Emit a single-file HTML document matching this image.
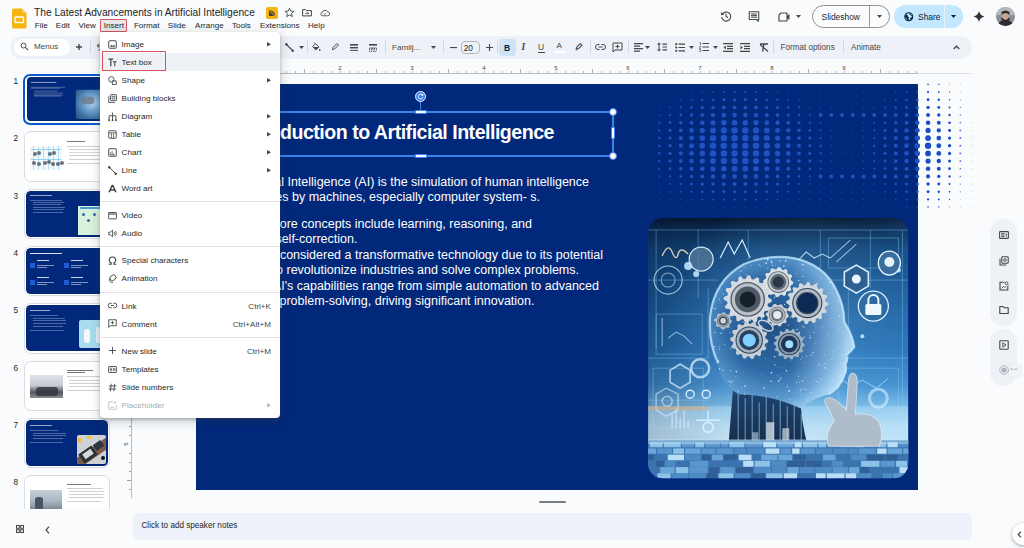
<!DOCTYPE html><html><head><meta charset="utf-8"><style>
*{margin:0;padding:0;box-sizing:border-box}
html,body{width:1024px;height:548px;overflow:hidden;background:#f9fbfd;font-family:"Liberation Sans",sans-serif;color:#1f1f1f}
.abs{position:absolute}
.t{position:absolute;white-space:nowrap;line-height:1}
svg{position:absolute;overflow:visible}
</style></head><body>
<svg class="abs" style="left:12px;top:8px" width="15" height="21" viewBox="0 0 15 21">
<path d="M1.5 0.5 H10 L14.5 5 V19 Q14.5 20.5 13 20.5 H1.5 Q0 20.5 0 19 V2 Q0 0.5 1.5 0.5Z" fill="#f6b40e"/>
<path d="M10 0.5 L14.5 5 H11.5 Q10 5 10 3.5Z" fill="#f9cf6b"/>
<rect x="3" y="9" width="8.5" height="5.5" rx="0.8" fill="none" stroke="#fff" stroke-width="1.4"/>
</svg>
<div class="t" style="left:34px;top:8px;font-size:10.2px;color:#1f1f1f">The Latest Advancements in Artificial Intelligence</div>
<svg style="left:266px;top:7px" width="12" height="12" viewBox="0 0 12 12"><rect x="0" y="0" width="12" height="12" rx="2" fill="#f6b40e"/>
<path d="M3 3.5 H6 L9 6.5 V9 H3Z" fill="#3c3c3c"/><path d="M2.5 2.5 L9.5 9.5" stroke="#f6b40e" stroke-width="1.2"/><path d="M2.5 2.5 L9.5 9.5" stroke="#3c3c3c" stroke-width="0.6"/></svg>
<svg style="left:284px;top:7px" width="11" height="11" viewBox="0 0 24 24"><path d="M12 2.5l2.8 6.4 6.9.6-5.2 4.6 1.6 6.8L12 17.3l-6.1 3.6 1.6-6.8L2.3 9.5l6.9-.6z" fill="none" stroke="#444746" stroke-width="2"/></svg>
<svg style="left:302px;top:9.3px" width="10" height="7.5" viewBox="0 0 20 15"><path d="M1.2 1.2h6l1.6 2h10v10.6H1.2z" fill="none" stroke="#444746" stroke-width="2" stroke-linejoin="round"/><path d="M6 8.5h7M10.5 6l2.5 2.5-2.5 2.5" fill="none" stroke="#444746" stroke-width="1.6"/></svg>
<svg style="left:320px;top:8.8px" width="10" height="7.5" viewBox="0 0 20 15"><path d="M5 13.5h10.5a3.8 3.8 0 0 0 0-7.6 5.8 5.8 0 0 0-11 1.4A3.1 3.1 0 0 0 5 13.5z" fill="none" stroke="#444746" stroke-width="1.7"/><path d="M7.5 9.3l2 2 3.5-3.5" fill="none" stroke="#444746" stroke-width="1.4"/></svg>
<div class="abs" style="left:100px;top:19px;width:27px;height:13px;background:#e6e8eb;border:1px solid #d9525e;border-radius:1px"></div>
<div class="t" style="left:34.7px;top:21.8px;font-size:8.1px;color:#1f1f1f">File</div>
<div class="t" style="left:55.8px;top:21.8px;font-size:8.1px;color:#1f1f1f">Edit</div>
<div class="t" style="left:78.4px;top:21.8px;font-size:8.1px;color:#1f1f1f">View</div>
<div class="t" style="left:103.75px;top:21.8px;font-size:8.1px;color:#1f1f1f">Insert</div>
<div class="t" style="left:133.9px;top:21.8px;font-size:8.1px;color:#1f1f1f">Format</div>
<div class="t" style="left:167.8px;top:21.8px;font-size:8.1px;color:#1f1f1f">Slide</div>
<div class="t" style="left:195px;top:21.8px;font-size:8.1px;color:#1f1f1f">Arrange</div>
<div class="t" style="left:232px;top:21.8px;font-size:8.1px;color:#1f1f1f">Tools</div>
<div class="t" style="left:260px;top:21.8px;font-size:8.1px;color:#1f1f1f">Extensions</div>
<div class="t" style="left:308px;top:21.8px;font-size:8.1px;color:#1f1f1f">Help</div>
<svg style="left:719.5px;top:10.3px" width="12" height="12" viewBox="0 0 24 24"><path d="M4.2 9.5A9 9 0 1 1 3.5 14" fill="none" stroke="#444746" stroke-width="2.3"/><path d="M1.5 4.5l1 6 6-1.5z" fill="#444746"/><path d="M12 7v5.5l4 3" fill="none" stroke="#444746" stroke-width="2.2"/></svg>
<svg style="left:747.5px;top:10.8px" width="12" height="11" viewBox="0 0 24 22"><path d="M2.5 1.5h19v15.5h-1v3.5l-3.5-3.5H2.5z" fill="none" stroke="#444746" stroke-width="2.2" stroke-linejoin="round"/><path d="M6 6h12M6 9.2h12M6 12.4h12" stroke="#444746" stroke-width="2"/></svg>
<svg style="left:777.5px;top:11.5px" width="12" height="10" viewBox="0 0 24 20"><path d="M6 2h12v16H2V6z" fill="none" stroke="#444746" stroke-width="2.3" stroke-linejoin="round"/><path d="M18 8l5-4v12l-5-4z" fill="#444746"/></svg>
<svg style="left:795.5px;top:15px" width="5" height="3" viewBox="0 0 5 3"><path d="M0 0h5L2.5 3z" fill="#444746"/></svg>
<div class="abs" style="left:812px;top:5px;width:78px;height:23px;border:1px solid #8f9290;border-radius:12px"></div>
<div class="abs" style="left:869px;top:5.5px;width:1px;height:22px;background:#9aa0a6"></div>
<div class="t" style="left:821.5px;top:12.6px;font-size:8.45px;color:#1f1f1f">Slideshow</div>
<svg style="left:877px;top:15.2px" width="5" height="3" viewBox="0 0 5 3"><path d="M0 0h5L2.5 3z" fill="#444746"/></svg>
<div class="abs" style="left:894px;top:5px;width:69px;height:23px;background:#c2e7ff;border-radius:12px"></div>
<div class="abs" style="left:944px;top:5px;width:1px;height:23px;background:#f9fbfd;opacity:0.6"></div>
<svg style="left:903.5px;top:12px" width="9.5" height="9.5" viewBox="0 0 24 24"><circle cx="12" cy="12" r="10" fill="none" stroke="#001d35" stroke-width="2.6"/><path d="M5 6.5l3.5 2 .5 3 2.5 1.5-1 4 1 4.5-3-2-1-4-4-2.5zM14 3l1 3 3 1 1 3 3 1M15.5 20l.5-4 3-2 2.5 1" fill="#001d35" stroke="#001d35" stroke-width="1.5" stroke-linejoin="round"/></svg>
<div class="t" style="left:918px;top:12.6px;font-size:8.45px;color:#001d35">Share</div>
<svg style="left:951px;top:15.2px" width="5" height="3" viewBox="0 0 5 3"><path d="M0 0h5L2.5 3z" fill="#001d35"/></svg>
<svg style="left:973px;top:10px" width="12" height="13" viewBox="0 0 24 24"><path d="M12 1C13.2 7 17 10.8 23 12 17 13.2 13.2 17 12 23 10.8 17 7 13.2 1 12 7 10.8 10.8 7 12 1Z" fill="#303134"/></svg>
<svg style="left:996px;top:7px" width="19" height="19" viewBox="0 0 19 19"><defs><clipPath id="av"><circle cx="9.5" cy="9.5" r="9.5"/></clipPath></defs>
<g clip-path="url(#av)"><rect width="19" height="19" fill="#8a9096"/><rect width="19" height="8" fill="#b5b9bd"/><ellipse cx="9.5" cy="9" rx="4.2" ry="5" fill="#c7a591"/><path d="M5.5 8q4-4 8 0v-3q-4-3-8 0z" fill="#2b2b2b"/><path d="M5.5 10q4 6 8 0v3q-4 3-8 0z" fill="#2a2522"/><path d="M1 19q2-6 8.5-6t8.5 6z" fill="#2b2d30"/></g></svg>
<div class="abs" style="left:10px;top:36px;width:962px;height:22.5px;background:#eef2f8;border-radius:12px"></div>
<div class="abs" style="left:14px;top:39px;width:56px;height:16.5px;background:#fff;border-radius:9px"></div>
<svg style="left:20px;top:42px" width="9" height="9" viewBox="0 0 24 24"><circle cx="9.5" cy="9.5" r="6.5" fill="none" stroke="#444746" stroke-width="2.6"/><path d="M14.5 14.5l7 7" stroke="#444746" stroke-width="2.8"/></svg>
<div class="t" style="left:34px;top:42.5px;font-size:8.1px;color:#444746">Menus</div>
<svg style="left:76px;top:44px" width="6" height="6" viewBox="0 0 6 6"><path d="M3 0v6M0 3h6" stroke="#444746" stroke-width="1.4"/></svg>
<div class="abs" style="left:89.5px;top:41px;width:1px;height:12px;background:#d3d6da"></div>
<svg style="left:95px;top:42px" width="10" height="10" viewBox="0 0 24 24"><path d="M7 9h9a5 5 0 0 1 0 10H8" fill="none" stroke="#444746" stroke-width="2.4"/><path d="M10 4L5 9l5 5" fill="none" stroke="#444746" stroke-width="2.4"/></svg>
<svg style="left:284.5px;top:42.5px" width="9" height="9" viewBox="0 0 9 9"><path d="M1 1L8 8" stroke="#444746" stroke-width="1.1"/><circle cx="1.3" cy="1.3" r="1.2" fill="#444746"/><circle cx="7.7" cy="7.7" r="1.2" fill="#444746"/></svg>
<svg style="left:298.5px;top:46px" width="5" height="3" viewBox="0 0 5 3"><path d="M0 0h5L2.5 3z" fill="#444746"/></svg>
<div class="abs" style="left:307px;top:41px;width:1px;height:12px;background:#d3d6da"></div>
<svg style="left:311px;top:42px" width="10" height="10" viewBox="0 0 24 24"><path d="M4 11l7-7 8 8-7 7z" fill="none" stroke="#444746" stroke-width="2.4" stroke-linejoin="round"/><path d="M4 12h14l-6 6z" fill="#444746"/><path d="M8 2l3 2" stroke="#444746" stroke-width="2"/><circle cx="21" cy="19" r="2" fill="#444746"/></svg>
<svg style="left:331px;top:42px" width="9" height="9" viewBox="0 0 24 24"><path d="M4 20l1-5L16 4l4 4L9 19z" fill="none" stroke="#444746" stroke-width="2.6" stroke-linejoin="round"/></svg>
<svg style="left:350px;top:43.5px" width="8" height="8" viewBox="0 0 8 8"><rect x="0" y="0" width="8" height="1.6" fill="#444746"/><rect x="0" y="3" width="8" height="1.4" fill="#444746"/><rect x="0" y="5.8" width="8" height="1.2" fill="#444746" fill-opacity=".85"/></svg>
<svg style="left:369px;top:43.5px" width="8" height="8" viewBox="0 0 8 8"><rect x="0" y="0" width="8" height="1.6" fill="#444746"/><path d="M0.5 6.5V4h7v2.5M2.5 4v2.5M4 4v2.5M5.5 4v2.5" fill="none" stroke="#444746" stroke-width=".7"/><path d="M0 7.5h1.2M2 7.5h1.2M4 7.5h1.2M6 7.5h1.2" stroke="#444746" stroke-width=".8"/></svg>
<div class="abs" style="left:385px;top:41px;width:1px;height:12px;background:#d3d6da"></div>
<div class="t" style="left:392px;top:43.6px;font-size:8.1px;color:#444746">Familj...</div>
<svg style="left:430.5px;top:46px" width="5" height="3" viewBox="0 0 5 3"><path d="M0 0h5L2.5 3z" fill="#444746"/></svg>
<div class="abs" style="left:443px;top:41px;width:1px;height:12px;background:#d3d6da"></div>
<svg style="left:450px;top:46.8px" width="7" height="2" viewBox="0 0 7 2"><rect width="7" height="1.1" fill="#444746"/></svg>
<div class="abs" style="left:460.5px;top:40.5px;width:19px;height:13.3px;border:1px solid #b3b6b9;border-radius:4px"></div>
<div class="t" style="left:463.7px;top:43.5px;font-size:8.3px;color:#1f1f1f">20</div>
<svg style="left:485.5px;top:43.8px" width="7" height="7" viewBox="0 0 7 7"><path d="M3.5 0v7M0 3.5h7" stroke="#444746" stroke-width="1.1"/></svg>
<div class="abs" style="left:497px;top:41px;width:1px;height:12px;background:#d3d6da"></div>
<div class="abs" style="left:499px;top:39px;width:16.5px;height:16.5px;background:#cde3f6;border-radius:4px"></div>
<div class="t" style="left:504px;top:43.5px;font-size:8.5px;font-weight:bold;color:#041e49">B</div>
<div class="t" style="left:521.5px;top:43.3px;font-size:9.5px;font-style:italic;font-weight:bold;font-family:'Liberation Serif',serif;color:#444746">I</div>
<div class="t" style="left:538px;top:42.5px;font-size:8.5px;color:#444746">U</div>
<div class="abs" style="left:537.5px;top:51.5px;width:7.5px;height:1px;background:#444746"></div>
<div class="t" style="left:556.5px;top:42px;font-size:8px;color:#444746">A</div>
<div class="abs" style="left:554px;top:51px;width:12px;height:2px;background:#fff"></div>
<svg style="left:574px;top:42px" width="10" height="9" viewBox="0 0 24 22"><path d="M5 17l2-5 8-8 4 4-8 8z" fill="none" stroke="#444746" stroke-width="2.6" stroke-linejoin="round"/><path d="M4 19h5" stroke="#444746" stroke-width="2"/></svg>
<div class="abs" style="left:590px;top:41px;width:1px;height:12px;background:#d3d6da"></div>
<svg style="left:595px;top:44px" width="11" height="6" viewBox="0 0 22 12"><path d="M9 1H6a5 5 0 0 0 0 10h3M13 1h3a5 5 0 0 1 0 10h-3M7 6h8" fill="none" stroke="#444746" stroke-width="2"/></svg>
<svg style="left:612px;top:42px" width="11" height="11" viewBox="0 0 22 22"><path d="M2 2h18v14H6l-4 4z" fill="none" stroke="#444746" stroke-width="2"/><path d="M11 5v8M7 9h8" stroke="#444746" stroke-width="2"/></svg>
<div class="abs" style="left:628px;top:41px;width:1px;height:12px;background:#d3d6da"></div>
<svg style="left:633.5px;top:42.5px" width="9" height="9" viewBox="0 0 9 9"><path d="M0 0.7h9M0 3.2h6M0 5.7h9M0 8.2h6" stroke="#444746" stroke-width="1.2"/></svg>
<svg style="left:645px;top:46px" width="5" height="3" viewBox="0 0 5 3"><path d="M0 0h5L2.5 3z" fill="#444746"/></svg>
<svg style="left:657px;top:42px" width="10" height="10" viewBox="0 0 10 10"><path d="M2 0.5l2 2H0zM2 9.5l2-2H0z" fill="#444746"/><path d="M2 2v6" stroke="#444746" stroke-width="1"/><path d="M5.5 2.2h4.5M5.5 5h4.5M5.5 7.8h4.5" stroke="#444746" stroke-width="1.2"/></svg>
<svg style="left:675px;top:42.5px" width="10" height="9" viewBox="0 0 10 9"><circle cx="1.2" cy="1.2" r="1.1" fill="#444746"/><circle cx="1.2" cy="4.5" r="1.1" fill="#444746"/><circle cx="1.2" cy="7.8" r="1.1" fill="#444746"/><path d="M3.5 1.2h6.5M3.5 4.5h6.5M3.5 7.8h6.5" stroke="#444746" stroke-width="1.2"/></svg>
<svg style="left:688.5px;top:46px" width="5" height="3" viewBox="0 0 5 3"><path d="M0 0h5L2.5 3z" fill="#444746"/></svg>
<svg style="left:699px;top:42px" width="10" height="10" viewBox="0 0 10 10"><path d="M0.5 0.5h1v2.5M0.3 4.5h1.5l-1.5 2h1.5M0.3 7.5h1.5v2h-1.5" fill="none" stroke="#444746" stroke-width="0.7"/><path d="M3.5 1.5h6.5M3.5 5h6.5M3.5 8.5h6.5" stroke="#444746" stroke-width="1.2"/></svg>
<svg style="left:712.5px;top:46px" width="5" height="3" viewBox="0 0 5 3"><path d="M0 0h5L2.5 3z" fill="#444746"/></svg>
<svg style="left:723px;top:42.5px" width="10" height="9" viewBox="0 0 10 9"><path d="M0 0.6h10M4 3.3h6M4 5.7h6M0 8.4h10" stroke="#444746" stroke-width="1.2"/><path d="M2.8 2.5L0.5 4.5l2.3 2z" fill="#444746"/></svg>
<svg style="left:739.5px;top:42.5px" width="10" height="9" viewBox="0 0 10 9"><path d="M0 0.6h10M4 3.3h6M4 5.7h6M0 8.4h10" stroke="#444746" stroke-width="1.2"/><path d="M0.5 2.5l2.3 2-2.3 2z" fill="#444746"/></svg>
<svg style="left:758.5px;top:42.5px" width="10" height="9" viewBox="0 0 10 9"><path d="M1 1h8M5 1L3.5 8.5M1 1.5l8 7" stroke="#444746" stroke-width="1.3"/></svg>
<div class="abs" style="left:773px;top:41px;width:1px;height:12px;background:#d3d6da"></div>
<div class="t" style="left:780.5px;top:43.6px;font-size:8.15px;color:#444746">Format options</div>
<div class="abs" style="left:843px;top:41px;width:1px;height:12px;background:#d3d6da"></div>
<div class="t" style="left:851px;top:43.6px;font-size:8.15px;color:#444746">Animate</div>
<svg style="left:952.5px;top:45px" width="7" height="4.5" viewBox="0 0 7 4.5"><path d="M0.7 4L3.5 1.2 6.3 4" fill="none" stroke="#444746" stroke-width="1.3"/></svg>
<div class="abs" style="left:133px;top:73px;width:838px;height:1px;background:#dde1e6"></div>
<div class="abs" style="left:196px;top:73px;width:722px;height:1px;background:#b9bcbf"></div>
<div class="abs" style="left:196px;top:71px;width:1px;height:2px;background:#b0b4b8"></div><div class="abs" style="left:205px;top:71px;width:1px;height:2px;background:#b0b4b8"></div><div class="abs" style="left:214px;top:71px;width:1px;height:2px;background:#b0b4b8"></div><div class="abs" style="left:223px;top:71px;width:1px;height:2px;background:#b0b4b8"></div><div class="abs" style="left:232px;top:69px;width:1px;height:4px;background:#b0b4b8"></div><div class="abs" style="left:241px;top:71px;width:1px;height:2px;background:#b0b4b8"></div><div class="abs" style="left:250px;top:71px;width:1px;height:2px;background:#b0b4b8"></div><div class="abs" style="left:259px;top:71px;width:1px;height:2px;background:#b0b4b8"></div><div class="t" style="left:266.3px;top:64.5px;font-size:6px;color:#444746">1</div><div class="abs" style="left:268px;top:71px;width:1px;height:2px;background:#b0b4b8"></div><div class="abs" style="left:277px;top:71px;width:1px;height:2px;background:#b0b4b8"></div><div class="abs" style="left:286px;top:71px;width:1px;height:2px;background:#b0b4b8"></div><div class="abs" style="left:295px;top:71px;width:1px;height:2px;background:#b0b4b8"></div><div class="abs" style="left:304px;top:69px;width:1px;height:4px;background:#b0b4b8"></div><div class="abs" style="left:313px;top:71px;width:1px;height:2px;background:#b0b4b8"></div><div class="abs" style="left:322px;top:71px;width:1px;height:2px;background:#b0b4b8"></div><div class="abs" style="left:331px;top:71px;width:1px;height:2px;background:#b0b4b8"></div><div class="t" style="left:338.3px;top:64.5px;font-size:6px;color:#444746">2</div><div class="abs" style="left:340px;top:71px;width:1px;height:2px;background:#b0b4b8"></div><div class="abs" style="left:349px;top:71px;width:1px;height:2px;background:#b0b4b8"></div><div class="abs" style="left:358px;top:71px;width:1px;height:2px;background:#b0b4b8"></div><div class="abs" style="left:367px;top:71px;width:1px;height:2px;background:#b0b4b8"></div><div class="abs" style="left:376px;top:69px;width:1px;height:4px;background:#b0b4b8"></div><div class="abs" style="left:385px;top:71px;width:1px;height:2px;background:#b0b4b8"></div><div class="abs" style="left:394px;top:71px;width:1px;height:2px;background:#b0b4b8"></div><div class="abs" style="left:403px;top:71px;width:1px;height:2px;background:#b0b4b8"></div><div class="t" style="left:410.3px;top:64.5px;font-size:6px;color:#444746">3</div><div class="abs" style="left:412px;top:71px;width:1px;height:2px;background:#b0b4b8"></div><div class="abs" style="left:421px;top:71px;width:1px;height:2px;background:#b0b4b8"></div><div class="abs" style="left:430px;top:71px;width:1px;height:2px;background:#b0b4b8"></div><div class="abs" style="left:439px;top:71px;width:1px;height:2px;background:#b0b4b8"></div><div class="abs" style="left:448px;top:69px;width:1px;height:4px;background:#b0b4b8"></div><div class="abs" style="left:457px;top:71px;width:1px;height:2px;background:#b0b4b8"></div><div class="abs" style="left:466px;top:71px;width:1px;height:2px;background:#b0b4b8"></div><div class="abs" style="left:475px;top:71px;width:1px;height:2px;background:#b0b4b8"></div><div class="t" style="left:482.3px;top:64.5px;font-size:6px;color:#444746">4</div><div class="abs" style="left:484px;top:71px;width:1px;height:2px;background:#b0b4b8"></div><div class="abs" style="left:493px;top:71px;width:1px;height:2px;background:#b0b4b8"></div><div class="abs" style="left:502px;top:71px;width:1px;height:2px;background:#b0b4b8"></div><div class="abs" style="left:511px;top:71px;width:1px;height:2px;background:#b0b4b8"></div><div class="abs" style="left:520px;top:69px;width:1px;height:4px;background:#b0b4b8"></div><div class="abs" style="left:529px;top:71px;width:1px;height:2px;background:#b0b4b8"></div><div class="abs" style="left:538px;top:71px;width:1px;height:2px;background:#b0b4b8"></div><div class="abs" style="left:547px;top:71px;width:1px;height:2px;background:#b0b4b8"></div><div class="t" style="left:554.3px;top:64.5px;font-size:6px;color:#444746">5</div><div class="abs" style="left:556px;top:71px;width:1px;height:2px;background:#b0b4b8"></div><div class="abs" style="left:565px;top:71px;width:1px;height:2px;background:#b0b4b8"></div><div class="abs" style="left:574px;top:71px;width:1px;height:2px;background:#b0b4b8"></div><div class="abs" style="left:583px;top:71px;width:1px;height:2px;background:#b0b4b8"></div><div class="abs" style="left:592px;top:69px;width:1px;height:4px;background:#b0b4b8"></div><div class="abs" style="left:601px;top:71px;width:1px;height:2px;background:#b0b4b8"></div><div class="abs" style="left:610px;top:71px;width:1px;height:2px;background:#b0b4b8"></div><div class="abs" style="left:619px;top:71px;width:1px;height:2px;background:#b0b4b8"></div><div class="t" style="left:626.3px;top:64.5px;font-size:6px;color:#444746">6</div><div class="abs" style="left:628px;top:71px;width:1px;height:2px;background:#b0b4b8"></div><div class="abs" style="left:637px;top:71px;width:1px;height:2px;background:#b0b4b8"></div><div class="abs" style="left:646px;top:71px;width:1px;height:2px;background:#b0b4b8"></div><div class="abs" style="left:655px;top:71px;width:1px;height:2px;background:#b0b4b8"></div><div class="abs" style="left:664px;top:69px;width:1px;height:4px;background:#b0b4b8"></div><div class="abs" style="left:673px;top:71px;width:1px;height:2px;background:#b0b4b8"></div><div class="abs" style="left:682px;top:71px;width:1px;height:2px;background:#b0b4b8"></div><div class="abs" style="left:691px;top:71px;width:1px;height:2px;background:#b0b4b8"></div><div class="t" style="left:698.3px;top:64.5px;font-size:6px;color:#444746">7</div><div class="abs" style="left:700px;top:71px;width:1px;height:2px;background:#b0b4b8"></div><div class="abs" style="left:709px;top:71px;width:1px;height:2px;background:#b0b4b8"></div><div class="abs" style="left:718px;top:71px;width:1px;height:2px;background:#b0b4b8"></div><div class="abs" style="left:727px;top:71px;width:1px;height:2px;background:#b0b4b8"></div><div class="abs" style="left:736px;top:69px;width:1px;height:4px;background:#b0b4b8"></div><div class="abs" style="left:745px;top:71px;width:1px;height:2px;background:#b0b4b8"></div><div class="abs" style="left:754px;top:71px;width:1px;height:2px;background:#b0b4b8"></div><div class="abs" style="left:763px;top:71px;width:1px;height:2px;background:#b0b4b8"></div><div class="t" style="left:770.3px;top:64.5px;font-size:6px;color:#444746">8</div><div class="abs" style="left:772px;top:71px;width:1px;height:2px;background:#b0b4b8"></div><div class="abs" style="left:781px;top:71px;width:1px;height:2px;background:#b0b4b8"></div><div class="abs" style="left:790px;top:71px;width:1px;height:2px;background:#b0b4b8"></div><div class="abs" style="left:799px;top:71px;width:1px;height:2px;background:#b0b4b8"></div><div class="abs" style="left:808px;top:69px;width:1px;height:4px;background:#b0b4b8"></div><div class="abs" style="left:817px;top:71px;width:1px;height:2px;background:#b0b4b8"></div><div class="abs" style="left:826px;top:71px;width:1px;height:2px;background:#b0b4b8"></div><div class="abs" style="left:835px;top:71px;width:1px;height:2px;background:#b0b4b8"></div><div class="t" style="left:842.3px;top:64.5px;font-size:6px;color:#444746">9</div><div class="abs" style="left:844px;top:71px;width:1px;height:2px;background:#b0b4b8"></div><div class="abs" style="left:853px;top:71px;width:1px;height:2px;background:#b0b4b8"></div><div class="abs" style="left:862px;top:71px;width:1px;height:2px;background:#b0b4b8"></div><div class="abs" style="left:871px;top:71px;width:1px;height:2px;background:#b0b4b8"></div><div class="abs" style="left:880px;top:69px;width:1px;height:4px;background:#b0b4b8"></div><div class="abs" style="left:889px;top:71px;width:1px;height:2px;background:#b0b4b8"></div><div class="abs" style="left:898px;top:71px;width:1px;height:2px;background:#b0b4b8"></div><div class="abs" style="left:907px;top:71px;width:1px;height:2px;background:#b0b4b8"></div><div class="abs" style="left:916px;top:71px;width:1px;height:2px;background:#b0b4b8"></div>
<div class="abs" style="left:131px;top:84px;width:1px;height:414px;background:#b9bcbf"></div>
<div class="abs" style="left:129px;top:93px;width:2px;height:1px;background:#9aa0a6"></div><div class="abs" style="left:129px;top:102px;width:2px;height:1px;background:#9aa0a6"></div><div class="abs" style="left:129px;top:111px;width:2px;height:1px;background:#9aa0a6"></div><div class="abs" style="left:127px;top:120px;width:4px;height:1px;background:#9aa0a6"></div><div class="abs" style="left:129px;top:129px;width:2px;height:1px;background:#9aa0a6"></div><div class="abs" style="left:129px;top:138px;width:2px;height:1px;background:#9aa0a6"></div><div class="abs" style="left:129px;top:147px;width:2px;height:1px;background:#9aa0a6"></div><div class="t" style="left:123.5px;top:153px;font-size:6px;color:#444746;transform:rotate(-90deg)">1</div><div class="abs" style="left:129px;top:165px;width:2px;height:1px;background:#9aa0a6"></div><div class="abs" style="left:129px;top:174px;width:2px;height:1px;background:#9aa0a6"></div><div class="abs" style="left:129px;top:183px;width:2px;height:1px;background:#9aa0a6"></div><div class="abs" style="left:127px;top:192px;width:4px;height:1px;background:#9aa0a6"></div><div class="abs" style="left:129px;top:201px;width:2px;height:1px;background:#9aa0a6"></div><div class="abs" style="left:129px;top:210px;width:2px;height:1px;background:#9aa0a6"></div><div class="abs" style="left:129px;top:219px;width:2px;height:1px;background:#9aa0a6"></div><div class="t" style="left:123.5px;top:225px;font-size:6px;color:#444746;transform:rotate(-90deg)">2</div><div class="abs" style="left:129px;top:237px;width:2px;height:1px;background:#9aa0a6"></div><div class="abs" style="left:129px;top:246px;width:2px;height:1px;background:#9aa0a6"></div><div class="abs" style="left:129px;top:255px;width:2px;height:1px;background:#9aa0a6"></div><div class="abs" style="left:127px;top:264px;width:4px;height:1px;background:#9aa0a6"></div><div class="abs" style="left:129px;top:273px;width:2px;height:1px;background:#9aa0a6"></div><div class="abs" style="left:129px;top:282px;width:2px;height:1px;background:#9aa0a6"></div><div class="abs" style="left:129px;top:291px;width:2px;height:1px;background:#9aa0a6"></div><div class="t" style="left:123.5px;top:297px;font-size:6px;color:#444746;transform:rotate(-90deg)">3</div><div class="abs" style="left:129px;top:309px;width:2px;height:1px;background:#9aa0a6"></div><div class="abs" style="left:129px;top:318px;width:2px;height:1px;background:#9aa0a6"></div><div class="abs" style="left:129px;top:327px;width:2px;height:1px;background:#9aa0a6"></div><div class="abs" style="left:127px;top:336px;width:4px;height:1px;background:#9aa0a6"></div><div class="abs" style="left:129px;top:345px;width:2px;height:1px;background:#9aa0a6"></div><div class="abs" style="left:129px;top:354px;width:2px;height:1px;background:#9aa0a6"></div><div class="abs" style="left:129px;top:363px;width:2px;height:1px;background:#9aa0a6"></div><div class="t" style="left:123.5px;top:369px;font-size:6px;color:#444746;transform:rotate(-90deg)">4</div><div class="abs" style="left:129px;top:381px;width:2px;height:1px;background:#9aa0a6"></div><div class="abs" style="left:129px;top:390px;width:2px;height:1px;background:#9aa0a6"></div><div class="abs" style="left:129px;top:399px;width:2px;height:1px;background:#9aa0a6"></div><div class="abs" style="left:127px;top:408px;width:4px;height:1px;background:#9aa0a6"></div><div class="abs" style="left:129px;top:417px;width:2px;height:1px;background:#9aa0a6"></div><div class="abs" style="left:129px;top:426px;width:2px;height:1px;background:#9aa0a6"></div><div class="abs" style="left:129px;top:435px;width:2px;height:1px;background:#9aa0a6"></div><div class="t" style="left:123.5px;top:441px;font-size:6px;color:#444746;transform:rotate(-90deg)">5</div><div class="abs" style="left:129px;top:453px;width:2px;height:1px;background:#9aa0a6"></div><div class="abs" style="left:129px;top:462px;width:2px;height:1px;background:#9aa0a6"></div><div class="abs" style="left:129px;top:471px;width:2px;height:1px;background:#9aa0a6"></div><div class="abs" style="left:127px;top:480px;width:4px;height:1px;background:#9aa0a6"></div><div class="abs" style="left:129px;top:489px;width:2px;height:1px;background:#9aa0a6"></div>
<div class="abs" style="left:0;top:62px;width:125px;height:447px;overflow:hidden">
<div class="t" style="left:13.5px;top:16.0px;font-size:8.2px;color:#1f1f1f">1</div>
<div class="abs" style="left:23.3px;top:11.5px;width:87px;height:51.2px;border:2.4px solid #0b57d0;border-radius:7px;background:#fff"></div>
<div class="abs" style="left:27px;top:14.8px;width:80px;height:44.6px;overflow:hidden;border-radius:4px"><div style="transform:scale(0.9756);transform-origin:0 0;position:absolute;left:0;top:0;width:82px;height:46px"><div class="abs" style="left:0;top:0;width:82px;height:46px;background:#01287a"></div>
<div class="abs" style="left:4px;top:4.5px;width:26px;height:1.4px;background:#ffffff;opacity:.6"></div>
<div class="abs" style="left:4px;top:9.5px;width:35px;height:.8px;background:#ffffff;opacity:.3"></div>
<div class="abs" style="left:4px;top:11px;width:30px;height:.8px;background:#ffffff;opacity:.3"></div>
<div class="abs" style="left:7px;top:13.5px;width:24px;height:.8px;background:#ffffff;opacity:.3"></div>
<div class="abs" style="left:7px;top:15.5px;width:30px;height:.8px;background:#ffffff;opacity:.3"></div>
<div class="abs" style="left:7px;top:17.5px;width:30px;height:.8px;background:#ffffff;opacity:.3"></div>
<div class="abs" style="left:7px;top:19px;width:28px;height:.8px;background:#ffffff;opacity:.3"></div>
<div class="abs" style="left:50px;top:13px;width:30px;height:30px;border-radius:2px;background:radial-gradient(circle at 55% 45%,#b9d8ee 0,#6fa3cf 35%,#3b6f9f 70%,#2a4f7a 100%)"></div>
<div class="abs" style="left:55px;top:20px;width:14px;height:8px;border-radius:4px;background:#6c7a88;opacity:.8"></div></div></div>
<div class="t" style="left:13.5px;top:73.30000000000001px;font-size:8.2px;color:#1f1f1f">2</div>
<div class="abs" style="left:24px;top:69.30000000000001px;width:86px;height:50.5px;border:1px solid #dadce0;border-radius:7px;background:#fff"></div>
<div class="abs" style="left:26px;top:71.50000000000001px;width:82px;height:46px;overflow:hidden;border-radius:4.5px"><div class="abs" style="left:0;top:0;width:82px;height:46px;background:#fff"></div>
<div class="abs" style="left:4px;top:12px;width:32px;height:24px;background:#f3f8fb"></div><div class="abs" style="left:7px;top:12px;width:.6px;height:24px;background:#8fd0f0;opacity:.6"></div><div class="abs" style="left:12px;top:12px;width:.6px;height:24px;background:#8fd0f0;opacity:.6"></div><div class="abs" style="left:17px;top:12px;width:.6px;height:24px;background:#8fd0f0;opacity:.6"></div><div class="abs" style="left:22px;top:12px;width:.6px;height:24px;background:#8fd0f0;opacity:.6"></div><div class="abs" style="left:27px;top:12px;width:.6px;height:24px;background:#8fd0f0;opacity:.6"></div><div class="abs" style="left:32px;top:12px;width:.6px;height:24px;background:#8fd0f0;opacity:.6"></div>
<div class="abs" style="left:5px;top:15px;width:30px;height:1px;background:#6fc3e8;opacity:.7"></div>
<div class="abs" style="left:5px;top:25px;width:30px;height:1px;background:#6fc3e8;opacity:.7"></div>
<div class="abs" style="left:7px;top:18px;width:4px;height:4px;border-radius:50%;background:#4d5b69;opacity:.85"></div><div class="abs" style="left:11px;top:17px;width:4px;height:4px;border-radius:50%;background:#4d5b69;opacity:.85"></div><div class="abs" style="left:22px;top:18px;width:4px;height:4px;border-radius:50%;background:#4d5b69;opacity:.85"></div><div class="abs" style="left:26px;top:17px;width:4px;height:4px;border-radius:50%;background:#4d5b69;opacity:.85"></div><div class="abs" style="left:6px;top:27px;width:4px;height:4px;border-radius:50%;background:#4d5b69;opacity:.85"></div><div class="abs" style="left:11px;top:28px;width:4px;height:4px;border-radius:50%;background:#4d5b69;opacity:.85"></div><div class="abs" style="left:17px;top:27px;width:4px;height:4px;border-radius:50%;background:#4d5b69;opacity:.85"></div><div class="abs" style="left:21px;top:26px;width:4px;height:4px;border-radius:50%;background:#4d5b69;opacity:.85"></div><div class="abs" style="left:25px;top:28px;width:4px;height:4px;border-radius:50%;background:#4d5b69;opacity:.85"></div><div class="abs" style="left:30px;top:28px;width:4px;height:4px;border-radius:50%;background:#4d5b69;opacity:.85"></div><div class="abs" style="left:34px;top:27px;width:4px;height:4px;border-radius:50%;background:#4d5b69;opacity:.85"></div>
<div class="abs" style="left:41px;top:7.5px;width:18px;height:1.2px;background:#777"></div>
<div class="abs" style="left:41px;top:12.5px;width:35px;height:.7px;background:#d0d0d0"></div>
<div class="abs" style="left:43px;top:15.5px;width:35px;height:.7px;background:#d0d0d0"></div>
<div class="abs" style="left:43px;top:18.5px;width:35px;height:.7px;background:#d8d8d8"></div>
<div class="abs" style="left:43px;top:21.5px;width:35px;height:.7px;background:#d0d0d0"></div>
<div class="abs" style="left:43px;top:25px;width:35px;height:.7px;background:#d0d0d0"></div>
<div class="abs" style="left:41px;top:29px;width:37px;height:.7px;background:#d0d0d0"></div></div>
<div class="t" style="left:13.5px;top:130.6px;font-size:8.2px;color:#1f1f1f">3</div>
<div class="abs" style="left:24px;top:126.6px;width:86px;height:50.5px;border:1px solid #dadce0;border-radius:7px;background:#fff"></div>
<div class="abs" style="left:26px;top:128.79999999999998px;width:82px;height:46px;overflow:hidden;border-radius:4.5px"><div class="abs" style="left:0;top:0;width:82px;height:46px;background:#01287a;border-radius:4px"></div>
<div class="abs" style="left:4px;top:4px;width:22px;height:1.3px;background:#ffffff;opacity:.6"></div>
<div class="abs" style="left:4px;top:9px;width:32px;height:.8px;background:#ffffff;opacity:.3"></div>
<div class="abs" style="left:7px;top:11.5px;width:31px;height:.8px;background:#ffffff;opacity:.3"></div>
<div class="abs" style="left:7px;top:13.5px;width:28px;height:.8px;background:#ffffff;opacity:.3"></div>
<div class="abs" style="left:7px;top:16px;width:32px;height:.8px;background:#ffffff;opacity:.3"></div>
<div class="abs" style="left:7px;top:18.5px;width:31px;height:.8px;background:#ffffff;opacity:.3"></div>
<div class="abs" style="left:7px;top:21px;width:30px;height:.8px;background:#ffffff;opacity:.3"></div>
<div class="abs" style="left:52px;top:15px;width:30px;height:29px;background:#d9f2dc"></div>
<div class="abs" style="left:54px;top:16px;width:28px;height:2.5px;background:#4a9ad0"></div>
<div class="abs" style="left:56px;top:22px;width:3px;height:3px;background:#3568b0;border-radius:50%"></div>
<div class="abs" style="left:67px;top:22px;width:3px;height:3px;background:#3568b0;border-radius:50%"></div>
<div class="abs" style="left:61px;top:28px;width:3px;height:3px;background:#3568b0;border-radius:50%"></div></div>
<div class="t" style="left:13.5px;top:187.89999999999998px;font-size:8.2px;color:#1f1f1f">4</div>
<div class="abs" style="left:24px;top:183.89999999999998px;width:86px;height:50.5px;border:1px solid #dadce0;border-radius:7px;background:#fff"></div>
<div class="abs" style="left:26px;top:186.09999999999997px;width:82px;height:46px;overflow:hidden;border-radius:4.5px"><div class="abs" style="left:0;top:0;width:82px;height:46px;background:#01287a;border-radius:4px"></div><div class="abs" style="left:4px;top:5px;width:32px;height:1.3px;background:#ffffff;opacity:.85"></div><div class="abs" style="left:4px;top:15px;width:5px;height:5px;background:#1e5bd0"></div><div class="abs" style="left:11px;top:12px;width:12px;height:1px;background:#ffffff;opacity:.8"></div><div class="abs" style="left:11px;top:17px;width:17px;height:.7px;background:#ffffff;opacity:.5"></div><div class="abs" style="left:11px;top:18.5px;width:10px;height:.7px;background:#ffffff;opacity:.5"></div><div class="abs" style="left:38px;top:15px;width:5px;height:5px;background:#1e5bd0"></div><div class="abs" style="left:45px;top:12px;width:12px;height:1px;background:#ffffff;opacity:.8"></div><div class="abs" style="left:45px;top:17px;width:17px;height:.7px;background:#ffffff;opacity:.5"></div><div class="abs" style="left:45px;top:18.5px;width:10px;height:.7px;background:#ffffff;opacity:.5"></div><div class="abs" style="left:4px;top:32px;width:5px;height:5px;background:#1e5bd0"></div><div class="abs" style="left:11px;top:29px;width:12px;height:1px;background:#ffffff;opacity:.8"></div><div class="abs" style="left:11px;top:34px;width:17px;height:.7px;background:#ffffff;opacity:.5"></div><div class="abs" style="left:11px;top:35.5px;width:10px;height:.7px;background:#ffffff;opacity:.5"></div><div class="abs" style="left:38px;top:32px;width:5px;height:5px;background:#1e5bd0"></div><div class="abs" style="left:45px;top:29px;width:12px;height:1px;background:#ffffff;opacity:.8"></div><div class="abs" style="left:45px;top:34px;width:17px;height:.7px;background:#ffffff;opacity:.5"></div><div class="abs" style="left:45px;top:35.5px;width:10px;height:.7px;background:#ffffff;opacity:.5"></div></div>
<div class="t" style="left:13.5px;top:245.2px;font-size:8.2px;color:#1f1f1f">5</div>
<div class="abs" style="left:24px;top:241.2px;width:86px;height:50.5px;border:1px solid #dadce0;border-radius:7px;background:#fff"></div>
<div class="abs" style="left:26px;top:243.39999999999998px;width:82px;height:46px;overflow:hidden;border-radius:4.5px"><div class="abs" style="left:0;top:0;width:82px;height:46px;background:#01287a;border-radius:4px"></div>
<div class="abs" style="left:4px;top:4.5px;width:20px;height:1.3px;background:#ffffff;opacity:.6"></div>
<div class="abs" style="left:4px;top:10px;width:28px;height:.8px;background:#ffffff;opacity:.3"></div>
<div class="abs" style="left:7px;top:12.5px;width:32px;height:.8px;background:#ffffff;opacity:.3"></div>
<div class="abs" style="left:7px;top:15px;width:33px;height:.8px;background:#ffffff;opacity:.3"></div>
<div class="abs" style="left:7px;top:18px;width:33px;height:.8px;background:#ffffff;opacity:.3"></div>
<div class="abs" style="left:7px;top:21px;width:30px;height:.8px;background:#ffffff;opacity:.3"></div>
<div class="abs" style="left:4px;top:25px;width:34px;height:.8px;background:#ffffff;opacity:.3"></div>
<div class="abs" style="left:53px;top:15px;width:28px;height:28px;border-radius:2px;background:#a9dcf0"></div>
<div class="abs" style="left:58px;top:24px;width:6px;height:14px;border-radius:3px;background:#f4f8fb"></div>
<div class="abs" style="left:70px;top:22px;width:5px;height:16px;border-radius:2px;background:#e8f1f6"></div></div>
<div class="t" style="left:13.5px;top:302.5px;font-size:8.2px;color:#1f1f1f">6</div>
<div class="abs" style="left:24px;top:298.5px;width:86px;height:50.5px;border:1px solid #dadce0;border-radius:7px;background:#fff"></div>
<div class="abs" style="left:26px;top:300.7px;width:82px;height:46px;overflow:hidden;border-radius:4.5px"><div class="abs" style="left:0;top:0;width:82px;height:46px;background:#fff"></div>
<div class="abs" style="left:4px;top:12px;width:33px;height:23px;background:linear-gradient(180deg,#dfe3e6 0,#c4cbd1 45%,#54575c 75%,#8b8f94 100%)"></div>
<div class="abs" style="left:10px;top:24px;width:22px;height:9px;background:#2f3238;border-radius:3px;opacity:.8"></div>
<div class="abs" style="left:41px;top:7px;width:26px;height:1.2px;background:#777"></div>
<div class="abs" style="left:41px;top:9.5px;width:18px;height:1.2px;background:#777"></div>
<div class="abs" style="left:41px;top:13.5px;width:36px;height:.7px;background:#d0d0d0"></div>
<div class="abs" style="left:43px;top:17px;width:35px;height:.7px;background:#d0d0d0"></div>
<div class="abs" style="left:43px;top:20px;width:35px;height:.7px;background:#d0d0d0"></div>
<div class="abs" style="left:43px;top:23px;width:35px;height:.7px;background:#d0d0d0"></div>
<div class="abs" style="left:41px;top:27px;width:34px;height:.7px;background:#d0d0d0"></div></div>
<div class="t" style="left:13.5px;top:359.79999999999995px;font-size:8.2px;color:#1f1f1f">7</div>
<div class="abs" style="left:24px;top:355.79999999999995px;width:86px;height:50.5px;border:1px solid #dadce0;border-radius:7px;background:#fff"></div>
<div class="abs" style="left:26px;top:357.99999999999994px;width:82px;height:46px;overflow:hidden;border-radius:4.5px"><div class="abs" style="left:0;top:0;width:82px;height:46px;background:#01287a;border-radius:4px"></div>
<div class="abs" style="left:4px;top:4.5px;width:22px;height:1.3px;background:#ffffff;opacity:.6"></div>
<div class="abs" style="left:4px;top:10px;width:28px;height:.8px;background:#ffffff;opacity:.3"></div>
<div class="abs" style="left:7px;top:12.5px;width:33px;height:.8px;background:#ffffff;opacity:.3"></div>
<div class="abs" style="left:7px;top:15px;width:33px;height:.8px;background:#ffffff;opacity:.3"></div>
<div class="abs" style="left:7px;top:18px;width:30px;height:.8px;background:#ffffff;opacity:.3"></div>
<div class="abs" style="left:4px;top:22px;width:33px;height:.8px;background:#ffffff;opacity:.3"></div>
<div class="abs" style="left:51px;top:14.5px;width:29px;height:29px;border-radius:2px;overflow:hidden;background:#cfd2d5">
<div class="abs" style="left:-8px;top:12px;width:50px;height:10px;background:#7d5c49;transform:rotate(-35deg)"></div>
<div class="abs" style="left:3px;top:14px;width:16px;height:11px;background:#2c2f35;transform:rotate(-35deg)"></div>
<div class="abs" style="left:6px;top:16.5px;width:10px;height:6px;background:#d5d9dd;transform:rotate(-35deg)"></div>
<div class="abs" style="left:17px;top:7px;width:9px;height:7px;background:#2f3540;transform:rotate(-35deg)"></div>
<div class="abs" style="left:1px;top:3px;width:3px;height:4px;background:#f2b630"></div>
<div class="abs" style="left:10px;top:1px;width:4px;height:3px;background:#f2c040"></div>
<div class="abs" style="left:24px;top:21px;width:4px;height:4px;border-radius:50%;background:#111"></div>
</div>
</div>
<div class="t" style="left:13.5px;top:417.09999999999997px;font-size:8.2px;color:#1f1f1f">8</div>
<div class="abs" style="left:24px;top:413.09999999999997px;width:86px;height:50.5px;border:1px solid #dadce0;border-radius:7px;background:#fff"></div>
<div class="abs" style="left:26px;top:415.29999999999995px;width:82px;height:46px;overflow:hidden;border-radius:4.5px"><div class="abs" style="left:0;top:0;width:82px;height:46px;background:#fff"></div>
<div class="abs" style="left:4px;top:13px;width:32px;height:22px;background:linear-gradient(180deg,#c6ced6 0,#aab6c2 50%,#6d7884 100%)"></div>
<div class="abs" style="left:9px;top:20px;width:8px;height:15px;background:#4a5563;border-radius:3px"></div>
<div class="abs" style="left:41px;top:6.5px;width:24px;height:1.2px;background:#777"></div>
<div class="abs" style="left:41px;top:11px;width:36px;height:.7px;background:#d0d0d0"></div>
<div class="abs" style="left:43px;top:14px;width:35px;height:.7px;background:#d0d0d0"></div>
<div class="abs" style="left:43px;top:17px;width:35px;height:.7px;background:#d0d0d0"></div>
<div class="abs" style="left:43px;top:20px;width:35px;height:.7px;background:#d0d0d0"></div>
<div class="abs" style="left:41px;top:24px;width:34px;height:.7px;background:#d0d0d0"></div></div>
</div>
<svg style="left:16px;top:525px" width="8" height="8" viewBox="0 0 8 8"><rect x=".5" y=".5" width="2.8" height="2.8" fill="none" stroke="#444746" stroke-width="1"/><rect x="4.7" y=".5" width="2.8" height="2.8" fill="none" stroke="#444746" stroke-width="1"/><rect x=".5" y="4.7" width="2.8" height="2.8" fill="none" stroke="#444746" stroke-width="1"/><rect x="4.7" y="4.7" width="2.8" height="2.8" fill="none" stroke="#444746" stroke-width="1"/></svg>
<svg style="left:45px;top:525.5px" width="5" height="8" viewBox="0 0 5 8"><path d="M4 0.7L1 4l3 3.3" fill="none" stroke="#444746" stroke-width="1.2"/></svg>
<div class="abs" style="left:196px;top:84px;width:722px;height:406px;background:#01287a"></div>
<svg style="left:650px;top:80px" width="330" height="135" viewBox="0 0 330 135"><circle cx="9.30" cy="4.40" r="0.55" fill="#1f53c0" fill-opacity="1.00"/><circle cx="9.30" cy="12.07" r="0.55" fill="#1f53c0" fill-opacity="1.00"/><circle cx="9.30" cy="19.73" r="0.55" fill="#1f53c0" fill-opacity="1.00"/><circle cx="9.30" cy="27.40" r="0.55" fill="#1f53c0" fill-opacity="1.00"/><circle cx="9.30" cy="35.06" r="0.81" fill="#1f53c0" fill-opacity="1.00"/><circle cx="9.30" cy="42.73" r="1.02" fill="#1f53c0" fill-opacity="1.00"/><circle cx="9.30" cy="50.39" r="1.18" fill="#1f53c0" fill-opacity="1.00"/><circle cx="9.30" cy="58.06" r="1.29" fill="#1f53c0" fill-opacity="1.00"/><circle cx="9.30" cy="65.72" r="1.33" fill="#1f53c0" fill-opacity="1.00"/><circle cx="9.30" cy="73.38" r="1.29" fill="#1f53c0" fill-opacity="1.00"/><circle cx="9.30" cy="81.05" r="1.19" fill="#1f53c0" fill-opacity="1.00"/><circle cx="9.30" cy="88.72" r="1.04" fill="#1f53c0" fill-opacity="1.00"/><circle cx="9.30" cy="96.38" r="0.82" fill="#1f53c0" fill-opacity="1.00"/><circle cx="9.30" cy="104.05" r="0.57" fill="#1f53c0" fill-opacity="1.00"/><circle cx="9.30" cy="111.71" r="0.55" fill="#1f53c0" fill-opacity="1.00"/><circle cx="9.30" cy="119.38" r="0.55" fill="#1f53c0" fill-opacity="1.00"/><circle cx="9.30" cy="127.04" r="0.55" fill="#1f53c0" fill-opacity="1.00"/><circle cx="20.05" cy="4.40" r="0.55" fill="#1f53c0" fill-opacity="1.00"/><circle cx="20.05" cy="12.07" r="0.55" fill="#1f53c0" fill-opacity="1.00"/><circle cx="20.05" cy="19.73" r="0.55" fill="#1f53c0" fill-opacity="1.00"/><circle cx="20.05" cy="27.40" r="0.85" fill="#1f53c0" fill-opacity="1.00"/><circle cx="20.05" cy="35.06" r="1.13" fill="#1f53c0" fill-opacity="1.00"/><circle cx="20.05" cy="42.73" r="1.37" fill="#1f53c0" fill-opacity="1.00"/><circle cx="20.05" cy="50.39" r="1.56" fill="#1f53c0" fill-opacity="1.00"/><circle cx="20.05" cy="58.06" r="1.68" fill="#1f53c0" fill-opacity="1.00"/><circle cx="20.05" cy="65.72" r="1.72" fill="#1f53c0" fill-opacity="1.00"/><circle cx="20.05" cy="73.38" r="1.68" fill="#1f53c0" fill-opacity="1.00"/><circle cx="20.05" cy="81.05" r="1.57" fill="#1f53c0" fill-opacity="1.00"/><circle cx="20.05" cy="88.72" r="1.39" fill="#1f53c0" fill-opacity="1.00"/><circle cx="20.05" cy="96.38" r="1.15" fill="#1f53c0" fill-opacity="1.00"/><circle cx="20.05" cy="104.05" r="0.87" fill="#1f53c0" fill-opacity="1.00"/><circle cx="20.05" cy="111.71" r="0.56" fill="#1f53c0" fill-opacity="1.00"/><circle cx="20.05" cy="119.38" r="0.55" fill="#1f53c0" fill-opacity="1.00"/><circle cx="20.05" cy="127.04" r="0.55" fill="#1f53c0" fill-opacity="1.00"/><circle cx="30.80" cy="4.40" r="0.55" fill="#1f53c0" fill-opacity="1.00"/><circle cx="30.80" cy="12.07" r="0.55" fill="#1f53c0" fill-opacity="1.00"/><circle cx="30.80" cy="19.73" r="0.79" fill="#1f53c0" fill-opacity="1.00"/><circle cx="30.80" cy="27.40" r="1.13" fill="#1f53c0" fill-opacity="1.00"/><circle cx="30.80" cy="35.06" r="1.44" fill="#1f53c0" fill-opacity="1.00"/><circle cx="30.80" cy="42.73" r="1.71" fill="#1f53c0" fill-opacity="1.00"/><circle cx="30.80" cy="50.39" r="1.92" fill="#1f53c0" fill-opacity="1.00"/><circle cx="30.80" cy="58.06" r="2.06" fill="#1f53c0" fill-opacity="1.00"/><circle cx="30.80" cy="65.72" r="2.11" fill="#1f53c0" fill-opacity="1.00"/><circle cx="30.80" cy="73.38" r="2.07" fill="#1f53c0" fill-opacity="1.00"/><circle cx="30.80" cy="81.05" r="1.93" fill="#1f53c0" fill-opacity="1.00"/><circle cx="30.80" cy="88.72" r="1.73" fill="#1f53c0" fill-opacity="1.00"/><circle cx="30.80" cy="96.38" r="1.46" fill="#1f53c0" fill-opacity="1.00"/><circle cx="30.80" cy="104.05" r="1.15" fill="#1f53c0" fill-opacity="1.00"/><circle cx="30.80" cy="111.71" r="0.81" fill="#1f53c0" fill-opacity="1.00"/><circle cx="30.80" cy="119.38" r="0.55" fill="#1f53c0" fill-opacity="1.00"/><circle cx="30.80" cy="127.04" r="0.55" fill="#1f53c0" fill-opacity="1.00"/><circle cx="41.55" cy="4.40" r="0.55" fill="#1f53c0" fill-opacity="1.00"/><circle cx="41.55" cy="12.07" r="0.63" fill="#1f53c0" fill-opacity="1.00"/><circle cx="41.55" cy="19.73" r="1.01" fill="#1f53c0" fill-opacity="1.00"/><circle cx="41.55" cy="27.40" r="1.38" fill="#1f53c0" fill-opacity="1.00"/><circle cx="41.55" cy="35.06" r="1.72" fill="#1f53c0" fill-opacity="1.00"/><circle cx="41.55" cy="42.73" r="2.03" fill="#1f53c0" fill-opacity="1.00"/><circle cx="41.55" cy="50.39" r="2.27" fill="#1f53c0" fill-opacity="1.00"/><circle cx="41.55" cy="58.06" r="2.44" fill="#1f53c0" fill-opacity="1.00"/><circle cx="41.55" cy="65.72" r="2.50" fill="#1f53c0" fill-opacity="1.00"/><circle cx="41.55" cy="73.38" r="2.45" fill="#1f53c0" fill-opacity="1.00"/><circle cx="41.55" cy="81.05" r="2.29" fill="#1f53c0" fill-opacity="1.00"/><circle cx="41.55" cy="88.72" r="2.05" fill="#1f53c0" fill-opacity="1.00"/><circle cx="41.55" cy="96.38" r="1.75" fill="#1f53c0" fill-opacity="1.00"/><circle cx="41.55" cy="104.05" r="1.41" fill="#1f53c0" fill-opacity="1.00"/><circle cx="41.55" cy="111.71" r="1.04" fill="#1f53c0" fill-opacity="1.00"/><circle cx="41.55" cy="119.38" r="0.65" fill="#1f53c0" fill-opacity="1.00"/><circle cx="41.55" cy="127.04" r="0.55" fill="#1f53c0" fill-opacity="1.00"/><circle cx="52.30" cy="4.40" r="0.55" fill="#1f53c0" fill-opacity="1.00"/><circle cx="52.30" cy="12.07" r="0.79" fill="#1f53c0" fill-opacity="1.00"/><circle cx="52.30" cy="19.73" r="1.20" fill="#1f53c0" fill-opacity="1.00"/><circle cx="52.30" cy="27.40" r="1.60" fill="#1f53c0" fill-opacity="1.00"/><circle cx="52.30" cy="35.06" r="1.97" fill="#1f53c0" fill-opacity="1.00"/><circle cx="52.30" cy="42.73" r="2.32" fill="#1f53c0" fill-opacity="1.00"/><circle cx="52.30" cy="50.39" r="2.61" fill="#1f53c0" fill-opacity="1.00"/><circle cx="52.30" cy="58.06" r="2.82" fill="#1f53c0" fill-opacity="1.00"/><circle cx="52.30" cy="65.72" r="2.90" fill="#1f53c0" fill-opacity="1.00"/><circle cx="52.30" cy="73.38" r="2.83" fill="#1f53c0" fill-opacity="1.00"/><circle cx="52.30" cy="81.05" r="2.63" fill="#1f53c0" fill-opacity="1.00"/><circle cx="52.30" cy="88.72" r="2.34" fill="#1f53c0" fill-opacity="1.00"/><circle cx="52.30" cy="96.38" r="2.00" fill="#1f53c0" fill-opacity="1.00"/><circle cx="52.30" cy="104.05" r="1.63" fill="#1f53c0" fill-opacity="1.00"/><circle cx="52.30" cy="111.71" r="1.23" fill="#1f53c0" fill-opacity="1.00"/><circle cx="52.30" cy="119.38" r="0.82" fill="#1f53c0" fill-opacity="1.00"/><circle cx="52.30" cy="127.04" r="0.55" fill="#1f53c0" fill-opacity="1.00"/><circle cx="63.05" cy="4.40" r="0.55" fill="#1f53c0" fill-opacity="1.00"/><circle cx="63.05" cy="12.07" r="0.92" fill="#1f53c0" fill-opacity="1.00"/><circle cx="63.05" cy="19.73" r="1.35" fill="#1f53c0" fill-opacity="1.00"/><circle cx="63.05" cy="27.40" r="1.77" fill="#1f53c0" fill-opacity="1.00"/><circle cx="63.05" cy="35.06" r="2.18" fill="#1f53c0" fill-opacity="1.00"/><circle cx="63.05" cy="42.73" r="2.56" fill="#1f53c0" fill-opacity="1.00"/><circle cx="63.05" cy="50.39" r="2.91" fill="#1f53c0" fill-opacity="1.00"/><circle cx="63.05" cy="58.06" r="3.18" fill="#1f53c0" fill-opacity="1.00"/><circle cx="63.05" cy="65.72" r="3.25" fill="#1f53c0" fill-opacity="1.00"/><circle cx="63.05" cy="73.38" r="3.19" fill="#1f53c0" fill-opacity="1.00"/><circle cx="63.05" cy="81.05" r="2.93" fill="#1f53c0" fill-opacity="1.00"/><circle cx="63.05" cy="88.72" r="2.59" fill="#1f53c0" fill-opacity="1.00"/><circle cx="63.05" cy="96.38" r="2.21" fill="#1f53c0" fill-opacity="1.00"/><circle cx="63.05" cy="104.05" r="1.80" fill="#1f53c0" fill-opacity="1.00"/><circle cx="63.05" cy="111.71" r="1.38" fill="#1f53c0" fill-opacity="1.00"/><circle cx="63.05" cy="119.38" r="0.96" fill="#1f53c0" fill-opacity="1.00"/><circle cx="63.05" cy="127.04" r="0.55" fill="#1f53c0" fill-opacity="1.00"/><circle cx="73.80" cy="4.40" r="0.57" fill="#1f53c0" fill-opacity="1.00"/><circle cx="73.80" cy="12.07" r="1.01" fill="#1f53c0" fill-opacity="1.00"/><circle cx="73.80" cy="19.73" r="1.45" fill="#1f53c0" fill-opacity="1.00"/><circle cx="73.80" cy="27.40" r="1.89" fill="#1f53c0" fill-opacity="1.00"/><circle cx="73.80" cy="35.06" r="2.32" fill="#1f53c0" fill-opacity="1.00"/><circle cx="73.80" cy="42.73" r="2.75" fill="#1f53c0" fill-opacity="1.00"/><circle cx="73.80" cy="50.39" r="3.15" fill="#1f53c0" fill-opacity="1.00"/><circle cx="73.80" cy="58.06" r="3.25" fill="#1f53c0" fill-opacity="1.00"/><circle cx="73.80" cy="65.72" r="3.25" fill="#1f53c0" fill-opacity="1.00"/><circle cx="73.80" cy="73.38" r="3.25" fill="#1f53c0" fill-opacity="1.00"/><circle cx="73.80" cy="81.05" r="3.18" fill="#1f53c0" fill-opacity="1.00"/><circle cx="73.80" cy="88.72" r="2.78" fill="#1f53c0" fill-opacity="1.00"/><circle cx="73.80" cy="96.38" r="2.35" fill="#1f53c0" fill-opacity="1.00"/><circle cx="73.80" cy="104.05" r="1.92" fill="#1f53c0" fill-opacity="1.00"/><circle cx="73.80" cy="111.71" r="1.48" fill="#1f53c0" fill-opacity="1.00"/><circle cx="73.80" cy="119.38" r="1.04" fill="#1f53c0" fill-opacity="1.00"/><circle cx="73.80" cy="127.04" r="0.60" fill="#1f53c0" fill-opacity="1.00"/><circle cx="84.55" cy="4.40" r="0.60" fill="#1f53c0" fill-opacity="1.00"/><circle cx="84.55" cy="12.07" r="1.05" fill="#1f53c0" fill-opacity="1.00"/><circle cx="84.55" cy="19.73" r="1.50" fill="#1f53c0" fill-opacity="1.00"/><circle cx="84.55" cy="27.40" r="1.94" fill="#1f53c0" fill-opacity="1.00"/><circle cx="84.55" cy="35.06" r="2.39" fill="#1f53c0" fill-opacity="1.00"/><circle cx="84.55" cy="42.73" r="2.84" fill="#1f53c0" fill-opacity="1.00"/><circle cx="84.55" cy="50.39" r="3.25" fill="#1f53c0" fill-opacity="1.00"/><circle cx="84.55" cy="58.06" r="3.25" fill="#1f53c0" fill-opacity="1.00"/><circle cx="84.55" cy="65.72" r="3.25" fill="#1f53c0" fill-opacity="1.00"/><circle cx="84.55" cy="73.38" r="3.25" fill="#1f53c0" fill-opacity="1.00"/><circle cx="84.55" cy="81.05" r="3.25" fill="#1f53c0" fill-opacity="1.00"/><circle cx="84.55" cy="88.72" r="2.87" fill="#1f53c0" fill-opacity="1.00"/><circle cx="84.55" cy="96.38" r="2.42" fill="#1f53c0" fill-opacity="1.00"/><circle cx="84.55" cy="104.05" r="1.98" fill="#1f53c0" fill-opacity="1.00"/><circle cx="84.55" cy="111.71" r="1.53" fill="#1f53c0" fill-opacity="1.00"/><circle cx="84.55" cy="119.38" r="1.08" fill="#1f53c0" fill-opacity="1.00"/><circle cx="84.55" cy="127.04" r="0.64" fill="#1f53c0" fill-opacity="1.00"/><circle cx="95.30" cy="4.40" r="0.60" fill="#1f53c0" fill-opacity="1.00"/><circle cx="95.30" cy="12.07" r="1.04" fill="#1f53c0" fill-opacity="1.00"/><circle cx="95.30" cy="19.73" r="1.49" fill="#1f53c0" fill-opacity="1.00"/><circle cx="95.30" cy="27.40" r="1.93" fill="#1f53c0" fill-opacity="1.00"/><circle cx="95.30" cy="35.06" r="2.38" fill="#1f53c0" fill-opacity="1.00"/><circle cx="95.30" cy="42.73" r="2.82" fill="#1f53c0" fill-opacity="1.00"/><circle cx="95.30" cy="50.39" r="3.25" fill="#1f53c0" fill-opacity="1.00"/><circle cx="95.30" cy="58.06" r="3.25" fill="#1f53c0" fill-opacity="1.00"/><circle cx="95.30" cy="65.72" r="3.25" fill="#1f53c0" fill-opacity="1.00"/><circle cx="95.30" cy="73.38" r="3.25" fill="#1f53c0" fill-opacity="1.00"/><circle cx="95.30" cy="81.05" r="3.25" fill="#1f53c0" fill-opacity="1.00"/><circle cx="95.30" cy="88.72" r="2.85" fill="#1f53c0" fill-opacity="1.00"/><circle cx="95.30" cy="96.38" r="2.41" fill="#1f53c0" fill-opacity="1.00"/><circle cx="95.30" cy="104.05" r="1.96" fill="#1f53c0" fill-opacity="1.00"/><circle cx="95.30" cy="111.71" r="1.52" fill="#1f53c0" fill-opacity="1.00"/><circle cx="95.30" cy="119.38" r="1.08" fill="#1f53c0" fill-opacity="1.00"/><circle cx="95.30" cy="127.04" r="0.63" fill="#1f53c0" fill-opacity="1.00"/><circle cx="106.05" cy="4.40" r="0.55" fill="#1f53c0" fill-opacity="1.00"/><circle cx="106.05" cy="12.07" r="0.99" fill="#1f53c0" fill-opacity="1.00"/><circle cx="106.05" cy="19.73" r="1.42" fill="#1f53c0" fill-opacity="1.00"/><circle cx="106.05" cy="27.40" r="1.85" fill="#1f53c0" fill-opacity="1.00"/><circle cx="106.05" cy="35.06" r="2.28" fill="#1f53c0" fill-opacity="1.00"/><circle cx="106.05" cy="42.73" r="2.69" fill="#1f53c0" fill-opacity="1.00"/><circle cx="106.05" cy="50.39" r="3.08" fill="#1f53c0" fill-opacity="1.00"/><circle cx="106.05" cy="58.06" r="3.25" fill="#1f53c0" fill-opacity="1.00"/><circle cx="106.05" cy="65.72" r="3.25" fill="#1f53c0" fill-opacity="1.00"/><circle cx="106.05" cy="73.38" r="3.25" fill="#1f53c0" fill-opacity="1.00"/><circle cx="106.05" cy="81.05" r="3.10" fill="#1f53c0" fill-opacity="1.00"/><circle cx="106.05" cy="88.72" r="2.72" fill="#1f53c0" fill-opacity="1.00"/><circle cx="106.05" cy="96.38" r="2.31" fill="#1f53c0" fill-opacity="1.00"/><circle cx="106.05" cy="104.05" r="1.88" fill="#1f53c0" fill-opacity="1.00"/><circle cx="106.05" cy="111.71" r="1.45" fill="#1f53c0" fill-opacity="1.00"/><circle cx="106.05" cy="119.38" r="1.02" fill="#1f53c0" fill-opacity="1.00"/><circle cx="106.05" cy="127.04" r="0.58" fill="#1f53c0" fill-opacity="1.00"/><circle cx="116.80" cy="4.40" r="0.55" fill="#1f53c0" fill-opacity="1.00"/><circle cx="116.80" cy="12.07" r="0.88" fill="#1f53c0" fill-opacity="1.00"/><circle cx="116.80" cy="19.73" r="1.30" fill="#1f53c0" fill-opacity="1.00"/><circle cx="116.80" cy="27.40" r="1.71" fill="#1f53c0" fill-opacity="1.00"/><circle cx="116.80" cy="35.06" r="2.11" fill="#1f53c0" fill-opacity="1.00"/><circle cx="116.80" cy="42.73" r="2.48" fill="#1f53c0" fill-opacity="1.00"/><circle cx="116.80" cy="50.39" r="2.81" fill="#1f53c0" fill-opacity="1.00"/><circle cx="116.80" cy="58.06" r="3.05" fill="#1f53c0" fill-opacity="1.00"/><circle cx="116.80" cy="65.72" r="3.15" fill="#1f53c0" fill-opacity="1.00"/><circle cx="116.80" cy="73.38" r="3.06" fill="#1f53c0" fill-opacity="1.00"/><circle cx="116.80" cy="81.05" r="2.83" fill="#1f53c0" fill-opacity="1.00"/><circle cx="116.80" cy="88.72" r="2.51" fill="#1f53c0" fill-opacity="1.00"/><circle cx="116.80" cy="96.38" r="2.14" fill="#1f53c0" fill-opacity="1.00"/><circle cx="116.80" cy="104.05" r="1.74" fill="#1f53c0" fill-opacity="1.00"/><circle cx="116.80" cy="111.71" r="1.33" fill="#1f53c0" fill-opacity="1.00"/><circle cx="116.80" cy="119.38" r="0.91" fill="#1f53c0" fill-opacity="1.00"/><circle cx="116.80" cy="127.04" r="0.55" fill="#1f53c0" fill-opacity="1.00"/><circle cx="127.55" cy="4.40" r="0.55" fill="#1f53c0" fill-opacity="1.00"/><circle cx="127.55" cy="12.07" r="0.74" fill="#1f53c0" fill-opacity="1.00"/><circle cx="127.55" cy="19.73" r="1.14" fill="#1f53c0" fill-opacity="1.00"/><circle cx="127.55" cy="27.40" r="1.52" fill="#1f53c0" fill-opacity="1.00"/><circle cx="127.55" cy="35.06" r="1.89" fill="#1f53c0" fill-opacity="1.00"/><circle cx="127.55" cy="42.73" r="2.22" fill="#1f53c0" fill-opacity="1.00"/><circle cx="127.55" cy="50.39" r="2.49" fill="#1f53c0" fill-opacity="1.00"/><circle cx="127.55" cy="58.06" r="2.68" fill="#1f53c0" fill-opacity="1.00"/><circle cx="127.55" cy="65.72" r="2.76" fill="#1f53c0" fill-opacity="1.00"/><circle cx="127.55" cy="73.38" r="2.69" fill="#1f53c0" fill-opacity="1.00"/><circle cx="127.55" cy="81.05" r="2.51" fill="#1f53c0" fill-opacity="1.00"/><circle cx="127.55" cy="88.72" r="2.24" fill="#1f53c0" fill-opacity="1.00"/><circle cx="127.55" cy="96.38" r="1.91" fill="#1f53c0" fill-opacity="1.00"/><circle cx="127.55" cy="104.05" r="1.55" fill="#1f53c0" fill-opacity="1.00"/><circle cx="127.55" cy="111.71" r="1.17" fill="#1f53c0" fill-opacity="1.00"/><circle cx="127.55" cy="119.38" r="0.77" fill="#1f53c0" fill-opacity="1.00"/><circle cx="127.55" cy="127.04" r="0.55" fill="#1f53c0" fill-opacity="1.00"/><circle cx="138.30" cy="4.40" r="0.55" fill="#1f53c0" fill-opacity="1.00"/><circle cx="138.30" cy="12.07" r="0.56" fill="#1f53c0" fill-opacity="1.00"/><circle cx="138.30" cy="19.73" r="0.94" fill="#1f53c0" fill-opacity="1.00"/><circle cx="138.30" cy="27.40" r="1.29" fill="#1f53c0" fill-opacity="1.00"/><circle cx="138.30" cy="35.06" r="1.62" fill="#1f53c0" fill-opacity="1.00"/><circle cx="138.30" cy="42.73" r="1.92" fill="#1f53c0" fill-opacity="1.00"/><circle cx="138.30" cy="50.39" r="2.15" fill="#1f53c0" fill-opacity="1.00"/><circle cx="138.30" cy="58.06" r="2.31" fill="#1f53c0" fill-opacity="1.00"/><circle cx="138.30" cy="65.72" r="2.36" fill="#1f53c0" fill-opacity="1.00"/><circle cx="138.30" cy="73.38" r="2.31" fill="#1f53c0" fill-opacity="1.00"/><circle cx="138.30" cy="81.05" r="2.16" fill="#1f53c0" fill-opacity="1.00"/><circle cx="138.30" cy="88.72" r="1.93" fill="#1f53c0" fill-opacity="1.00"/><circle cx="138.30" cy="96.38" r="1.65" fill="#1f53c0" fill-opacity="1.00"/><circle cx="138.30" cy="104.05" r="1.32" fill="#1f53c0" fill-opacity="1.00"/><circle cx="138.30" cy="111.71" r="0.96" fill="#1f53c0" fill-opacity="1.00"/><circle cx="138.30" cy="119.38" r="0.58" fill="#1f53c0" fill-opacity="1.00"/><circle cx="138.30" cy="127.04" r="0.55" fill="#1f53c0" fill-opacity="1.00"/><circle cx="149.05" cy="4.40" r="0.55" fill="#1f53c0" fill-opacity="1.00"/><circle cx="149.05" cy="12.07" r="0.55" fill="#1f53c0" fill-opacity="1.00"/><circle cx="149.05" cy="19.73" r="0.70" fill="#1f53c0" fill-opacity="1.00"/><circle cx="149.05" cy="27.40" r="1.03" fill="#1f53c0" fill-opacity="1.00"/><circle cx="149.05" cy="35.06" r="1.33" fill="#1f53c0" fill-opacity="1.00"/><circle cx="149.05" cy="42.73" r="1.59" fill="#1f53c0" fill-opacity="1.00"/><circle cx="149.05" cy="50.39" r="1.79" fill="#1f53c0" fill-opacity="1.00"/><circle cx="149.05" cy="58.06" r="1.92" fill="#1f53c0" fill-opacity="1.00"/><circle cx="149.05" cy="65.72" r="1.97" fill="#1f53c0" fill-opacity="1.00"/><circle cx="149.05" cy="73.38" r="1.93" fill="#1f53c0" fill-opacity="1.00"/><circle cx="149.05" cy="81.05" r="1.80" fill="#1f53c0" fill-opacity="1.00"/><circle cx="149.05" cy="88.72" r="1.61" fill="#1f53c0" fill-opacity="1.00"/><circle cx="149.05" cy="96.38" r="1.35" fill="#1f53c0" fill-opacity="1.00"/><circle cx="149.05" cy="104.05" r="1.05" fill="#1f53c0" fill-opacity="1.00"/><circle cx="149.05" cy="111.71" r="0.72" fill="#1f53c0" fill-opacity="1.00"/><circle cx="149.05" cy="119.38" r="0.55" fill="#1f53c0" fill-opacity="1.00"/><circle cx="149.05" cy="127.04" r="0.55" fill="#1f53c0" fill-opacity="1.00"/><circle cx="159.80" cy="4.40" r="0.55" fill="#1f53c0" fill-opacity="1.00"/><circle cx="159.80" cy="12.07" r="0.55" fill="#1f53c0" fill-opacity="1.00"/><circle cx="159.80" cy="19.73" r="0.55" fill="#1f53c0" fill-opacity="1.00"/><circle cx="159.80" cy="27.40" r="0.74" fill="#1f53c0" fill-opacity="1.00"/><circle cx="159.80" cy="35.06" r="1.02" fill="#1f53c0" fill-opacity="1.00"/><circle cx="159.80" cy="42.73" r="1.25" fill="#1f53c0" fill-opacity="1.00"/><circle cx="159.80" cy="50.39" r="1.42" fill="#1f53c0" fill-opacity="1.00"/><circle cx="159.80" cy="58.06" r="1.54" fill="#1f53c0" fill-opacity="1.00"/><circle cx="159.80" cy="65.72" r="1.58" fill="#1f53c0" fill-opacity="1.00"/><circle cx="159.80" cy="73.38" r="1.54" fill="#1f53c0" fill-opacity="1.00"/><circle cx="159.80" cy="81.05" r="1.43" fill="#1f53c0" fill-opacity="1.00"/><circle cx="159.80" cy="88.72" r="1.26" fill="#1f53c0" fill-opacity="1.00"/><circle cx="159.80" cy="96.38" r="1.04" fill="#1f53c0" fill-opacity="1.00"/><circle cx="159.80" cy="104.05" r="0.76" fill="#1f53c0" fill-opacity="1.00"/><circle cx="159.80" cy="111.71" r="0.55" fill="#1f53c0" fill-opacity="1.00"/><circle cx="159.80" cy="119.38" r="0.55" fill="#1f53c0" fill-opacity="1.00"/><circle cx="159.80" cy="127.04" r="0.55" fill="#1f53c0" fill-opacity="1.00"/><circle cx="170.55" cy="4.40" r="0.55" fill="#1f53c0" fill-opacity="1.00"/><circle cx="170.55" cy="12.07" r="0.55" fill="#1f53c0" fill-opacity="1.00"/><circle cx="170.55" cy="19.73" r="0.55" fill="#1f53c0" fill-opacity="1.00"/><circle cx="170.55" cy="27.40" r="0.55" fill="#1f53c0" fill-opacity="1.00"/><circle cx="170.55" cy="35.06" r="2.00" fill="#1f53c0" fill-opacity="1.00"/><circle cx="170.55" cy="42.73" r="0.89" fill="#1f53c0" fill-opacity="1.00"/><circle cx="170.55" cy="50.39" r="1.05" fill="#1f53c0" fill-opacity="1.00"/><circle cx="170.55" cy="58.06" r="1.15" fill="#1f53c0" fill-opacity="1.00"/><circle cx="170.55" cy="65.72" r="1.19" fill="#1f53c0" fill-opacity="1.00"/><circle cx="170.55" cy="73.38" r="1.15" fill="#1f53c0" fill-opacity="1.00"/><circle cx="170.55" cy="81.05" r="1.06" fill="#1f53c0" fill-opacity="1.00"/><circle cx="170.55" cy="88.72" r="0.91" fill="#1f53c0" fill-opacity="1.00"/><circle cx="170.55" cy="96.38" r="2.00" fill="#1f53c0" fill-opacity="1.00"/><circle cx="170.55" cy="104.05" r="0.55" fill="#1f53c0" fill-opacity="1.00"/><circle cx="170.55" cy="111.71" r="0.55" fill="#1f53c0" fill-opacity="1.00"/><circle cx="170.55" cy="119.38" r="0.55" fill="#1f53c0" fill-opacity="1.00"/><circle cx="170.55" cy="127.04" r="0.55" fill="#1f53c0" fill-opacity="1.00"/><circle cx="181.30" cy="4.40" r="0.55" fill="#1f53c0" fill-opacity="1.00"/><circle cx="181.30" cy="12.07" r="0.55" fill="#1f53c0" fill-opacity="1.00"/><circle cx="181.30" cy="19.73" r="0.55" fill="#1f53c0" fill-opacity="1.00"/><circle cx="181.30" cy="27.40" r="0.55" fill="#1f53c0" fill-opacity="1.00"/><circle cx="181.30" cy="35.06" r="2.00" fill="#1f53c0" fill-opacity="1.00"/><circle cx="181.30" cy="42.73" r="0.55" fill="#1f53c0" fill-opacity="1.00"/><circle cx="181.30" cy="50.39" r="0.67" fill="#1f53c0" fill-opacity="1.00"/><circle cx="181.30" cy="58.06" r="0.76" fill="#1f53c0" fill-opacity="1.00"/><circle cx="181.30" cy="65.72" r="0.79" fill="#1f53c0" fill-opacity="1.00"/><circle cx="181.30" cy="73.38" r="0.77" fill="#1f53c0" fill-opacity="1.00"/><circle cx="181.30" cy="81.05" r="0.68" fill="#1f53c0" fill-opacity="1.00"/><circle cx="181.30" cy="88.72" r="0.55" fill="#1f53c0" fill-opacity="1.00"/><circle cx="181.30" cy="96.38" r="2.00" fill="#1f53c0" fill-opacity="1.00"/><circle cx="181.30" cy="104.05" r="0.55" fill="#1f53c0" fill-opacity="1.00"/><circle cx="181.30" cy="111.71" r="0.55" fill="#1f53c0" fill-opacity="1.00"/><circle cx="181.30" cy="119.38" r="0.55" fill="#1f53c0" fill-opacity="1.00"/><circle cx="181.30" cy="127.04" r="0.55" fill="#1f53c0" fill-opacity="1.00"/><circle cx="192.05" cy="4.40" r="0.55" fill="#1f53c0" fill-opacity="1.00"/><circle cx="192.05" cy="12.07" r="0.55" fill="#1f53c0" fill-opacity="1.00"/><circle cx="192.05" cy="19.73" r="0.55" fill="#1f53c0" fill-opacity="1.00"/><circle cx="192.05" cy="27.40" r="0.55" fill="#1f53c0" fill-opacity="1.00"/><circle cx="192.05" cy="35.06" r="2.00" fill="#1f53c0" fill-opacity="1.00"/><circle cx="192.05" cy="42.73" r="0.55" fill="#1f53c0" fill-opacity="1.00"/><circle cx="192.05" cy="50.39" r="0.55" fill="#1f53c0" fill-opacity="1.00"/><circle cx="192.05" cy="58.06" r="0.55" fill="#1f53c0" fill-opacity="1.00"/><circle cx="192.05" cy="65.72" r="0.55" fill="#1f53c0" fill-opacity="1.00"/><circle cx="192.05" cy="73.38" r="0.55" fill="#1f53c0" fill-opacity="1.00"/><circle cx="192.05" cy="81.05" r="0.55" fill="#1f53c0" fill-opacity="1.00"/><circle cx="192.05" cy="88.72" r="0.55" fill="#1f53c0" fill-opacity="1.00"/><circle cx="192.05" cy="96.38" r="2.00" fill="#1f53c0" fill-opacity="1.00"/><circle cx="192.05" cy="104.05" r="0.55" fill="#1f53c0" fill-opacity="1.00"/><circle cx="192.05" cy="111.71" r="0.55" fill="#1f53c0" fill-opacity="1.00"/><circle cx="192.05" cy="119.38" r="0.55" fill="#1f53c0" fill-opacity="1.00"/><circle cx="192.05" cy="127.04" r="0.55" fill="#1f53c0" fill-opacity="1.00"/><circle cx="202.80" cy="4.40" r="0.55" fill="#1f53c0" fill-opacity="1.00"/><circle cx="202.80" cy="12.07" r="0.55" fill="#1f53c0" fill-opacity="1.00"/><circle cx="202.80" cy="19.73" r="0.55" fill="#1f53c0" fill-opacity="1.00"/><circle cx="202.80" cy="27.40" r="0.55" fill="#1f53c0" fill-opacity="1.00"/><circle cx="202.80" cy="35.06" r="2.00" fill="#1f53c0" fill-opacity="1.00"/><circle cx="202.80" cy="42.73" r="0.55" fill="#1f53c0" fill-opacity="1.00"/><circle cx="202.80" cy="50.39" r="0.55" fill="#1f53c0" fill-opacity="1.00"/><circle cx="202.80" cy="58.06" r="0.55" fill="#1f53c0" fill-opacity="1.00"/><circle cx="202.80" cy="65.72" r="0.55" fill="#1f53c0" fill-opacity="1.00"/><circle cx="202.80" cy="73.38" r="0.55" fill="#1f53c0" fill-opacity="1.00"/><circle cx="202.80" cy="81.05" r="0.55" fill="#1f53c0" fill-opacity="1.00"/><circle cx="202.80" cy="88.72" r="0.55" fill="#1f53c0" fill-opacity="1.00"/><circle cx="202.80" cy="96.38" r="2.00" fill="#1f53c0" fill-opacity="1.00"/><circle cx="202.80" cy="104.05" r="0.55" fill="#1f53c0" fill-opacity="1.00"/><circle cx="202.80" cy="111.71" r="0.55" fill="#1f53c0" fill-opacity="1.00"/><circle cx="202.80" cy="119.38" r="0.55" fill="#1f53c0" fill-opacity="1.00"/><circle cx="202.80" cy="127.04" r="0.55" fill="#1f53c0" fill-opacity="1.00"/><circle cx="213.55" cy="4.40" r="0.55" fill="#1f53c0" fill-opacity="1.00"/><circle cx="213.55" cy="12.07" r="0.55" fill="#1f53c0" fill-opacity="1.00"/><circle cx="213.55" cy="19.73" r="0.55" fill="#1f53c0" fill-opacity="1.00"/><circle cx="213.55" cy="27.40" r="0.55" fill="#1f53c0" fill-opacity="1.00"/><circle cx="213.55" cy="35.06" r="2.00" fill="#1f53c0" fill-opacity="1.00"/><circle cx="213.55" cy="42.73" r="0.61" fill="#1f53c0" fill-opacity="1.00"/><circle cx="213.55" cy="50.39" r="0.70" fill="#1f53c0" fill-opacity="1.00"/><circle cx="213.55" cy="58.06" r="0.75" fill="#1f53c0" fill-opacity="1.00"/><circle cx="213.55" cy="65.72" r="0.77" fill="#1f53c0" fill-opacity="1.00"/><circle cx="213.55" cy="73.38" r="0.76" fill="#1f53c0" fill-opacity="1.00"/><circle cx="213.55" cy="81.05" r="0.70" fill="#1f53c0" fill-opacity="1.00"/><circle cx="213.55" cy="88.72" r="0.62" fill="#1f53c0" fill-opacity="1.00"/><circle cx="213.55" cy="96.38" r="2.00" fill="#1f53c0" fill-opacity="1.00"/><circle cx="213.55" cy="104.05" r="0.55" fill="#1f53c0" fill-opacity="1.00"/><circle cx="213.55" cy="111.71" r="0.55" fill="#1f53c0" fill-opacity="1.00"/><circle cx="213.55" cy="119.38" r="0.55" fill="#1f53c0" fill-opacity="1.00"/><circle cx="213.55" cy="127.04" r="0.55" fill="#1f53c0" fill-opacity="1.00"/><circle cx="224.30" cy="4.40" r="0.55" fill="#1f53c0" fill-opacity="1.00"/><circle cx="224.30" cy="12.07" r="0.55" fill="#1f53c0" fill-opacity="1.00"/><circle cx="224.30" cy="19.73" r="0.55" fill="#1f53c0" fill-opacity="1.00"/><circle cx="224.30" cy="27.40" r="0.68" fill="#1f53c0" fill-opacity="1.00"/><circle cx="224.30" cy="35.06" r="2.00" fill="#1f53c0" fill-opacity="1.00"/><circle cx="224.30" cy="42.73" r="0.98" fill="#1f53c0" fill-opacity="1.00"/><circle cx="224.30" cy="50.39" r="1.09" fill="#1f53c0" fill-opacity="1.00"/><circle cx="224.30" cy="58.06" r="1.15" fill="#1f53c0" fill-opacity="1.00"/><circle cx="224.30" cy="65.72" r="1.18" fill="#1f53c0" fill-opacity="1.00"/><circle cx="224.30" cy="73.38" r="1.16" fill="#1f53c0" fill-opacity="1.00"/><circle cx="224.30" cy="81.05" r="1.09" fill="#1f53c0" fill-opacity="1.00"/><circle cx="224.30" cy="88.72" r="0.99" fill="#1f53c0" fill-opacity="1.00"/><circle cx="224.30" cy="96.38" r="2.00" fill="#1f53c0" fill-opacity="1.00"/><circle cx="224.30" cy="104.05" r="0.69" fill="#1f53c0" fill-opacity="1.00"/><circle cx="224.30" cy="111.71" r="0.55" fill="#1f53c0" fill-opacity="1.00"/><circle cx="224.30" cy="119.38" r="0.55" fill="#1f53c0" fill-opacity="1.00"/><circle cx="224.30" cy="127.04" r="0.55" fill="#1f53c0" fill-opacity="1.00"/><circle cx="235.05" cy="4.40" r="0.55" fill="#1f53c0" fill-opacity="1.00"/><circle cx="235.05" cy="12.07" r="0.55" fill="#1f53c0" fill-opacity="1.00"/><circle cx="235.05" cy="19.73" r="0.78" fill="#1f53c0" fill-opacity="1.00"/><circle cx="235.05" cy="27.40" r="0.99" fill="#1f53c0" fill-opacity="1.00"/><circle cx="235.05" cy="35.06" r="2.00" fill="#1f53c0" fill-opacity="1.00"/><circle cx="235.05" cy="42.73" r="1.35" fill="#1f53c0" fill-opacity="1.00"/><circle cx="235.05" cy="50.39" r="1.47" fill="#1f53c0" fill-opacity="1.00"/><circle cx="235.05" cy="58.06" r="1.55" fill="#1f53c0" fill-opacity="1.00"/><circle cx="235.05" cy="65.72" r="1.58" fill="#1f53c0" fill-opacity="1.00"/><circle cx="235.05" cy="73.38" r="1.56" fill="#1f53c0" fill-opacity="1.00"/><circle cx="235.05" cy="81.05" r="1.48" fill="#1f53c0" fill-opacity="1.00"/><circle cx="235.05" cy="88.72" r="1.36" fill="#1f53c0" fill-opacity="1.00"/><circle cx="235.05" cy="96.38" r="2.00" fill="#1f53c0" fill-opacity="1.00"/><circle cx="235.05" cy="104.05" r="1.00" fill="#1f53c0" fill-opacity="1.00"/><circle cx="235.05" cy="111.71" r="0.79" fill="#1f53c0" fill-opacity="1.00"/><circle cx="235.05" cy="119.38" r="0.56" fill="#1f53c0" fill-opacity="1.00"/><circle cx="235.05" cy="127.04" r="0.55" fill="#1f53c0" fill-opacity="1.00"/><circle cx="245.80" cy="4.40" r="0.55" fill="#1f53c0" fill-opacity="1.00"/><circle cx="245.80" cy="12.07" r="0.77" fill="#1f53c0" fill-opacity="1.00"/><circle cx="245.80" cy="19.73" r="1.03" fill="#1f53c0" fill-opacity="1.00"/><circle cx="245.80" cy="27.40" r="1.27" fill="#1f53c0" fill-opacity="1.00"/><circle cx="245.80" cy="35.06" r="2.00" fill="#1f53c0" fill-opacity="1.00"/><circle cx="245.80" cy="42.73" r="1.69" fill="#1f53c0" fill-opacity="1.00"/><circle cx="245.80" cy="50.39" r="1.84" fill="#1f53c0" fill-opacity="1.00"/><circle cx="245.80" cy="58.06" r="1.95" fill="#1f53c0" fill-opacity="1.00"/><circle cx="245.80" cy="65.72" r="1.99" fill="#1f53c0" fill-opacity="1.00"/><circle cx="245.80" cy="73.38" r="1.95" fill="#1f53c0" fill-opacity="1.00"/><circle cx="245.80" cy="81.05" r="1.85" fill="#1f53c0" fill-opacity="1.00"/><circle cx="245.80" cy="88.72" r="1.70" fill="#1f53c0" fill-opacity="1.00"/><circle cx="245.80" cy="96.38" r="2.00" fill="#1f53c0" fill-opacity="1.00"/><circle cx="245.80" cy="104.05" r="1.28" fill="#1f53c0" fill-opacity="1.00"/><circle cx="245.80" cy="111.71" r="1.04" fill="#1f53c0" fill-opacity="1.00"/><circle cx="245.80" cy="119.38" r="0.79" fill="#1f53c0" fill-opacity="1.00"/><circle cx="245.80" cy="127.04" r="0.55" fill="#1f53c0" fill-opacity="1.00"/><circle cx="256.55" cy="4.40" r="0.66" fill="#1f53c0" fill-opacity="1.00"/><circle cx="256.55" cy="12.07" r="0.95" fill="#1f53c0" fill-opacity="1.00"/><circle cx="256.55" cy="19.73" r="1.22" fill="#1f53c0" fill-opacity="1.00"/><circle cx="256.55" cy="27.40" r="1.49" fill="#1f53c0" fill-opacity="1.00"/><circle cx="256.55" cy="35.06" r="2.00" fill="#1f53c0" fill-opacity="1.00"/><circle cx="256.55" cy="42.73" r="1.98" fill="#1f53c0" fill-opacity="1.00"/><circle cx="256.55" cy="50.39" r="2.19" fill="#1f53c0" fill-opacity="1.00"/><circle cx="256.55" cy="58.06" r="2.33" fill="#1f53c0" fill-opacity="1.00"/><circle cx="256.55" cy="65.72" r="2.39" fill="#1f53c0" fill-opacity="1.00"/><circle cx="256.55" cy="73.38" r="2.34" fill="#1f53c0" fill-opacity="1.00"/><circle cx="256.55" cy="81.05" r="2.20" fill="#1f53c0" fill-opacity="1.00"/><circle cx="256.55" cy="88.72" r="2.00" fill="#1f53c0" fill-opacity="1.00"/><circle cx="256.55" cy="96.38" r="2.00" fill="#1f53c0" fill-opacity="1.00"/><circle cx="256.55" cy="104.05" r="1.51" fill="#1f53c0" fill-opacity="1.00"/><circle cx="256.55" cy="111.71" r="1.24" fill="#1f53c0" fill-opacity="1.00"/><circle cx="256.55" cy="119.38" r="0.97" fill="#1f53c0" fill-opacity="1.00"/><circle cx="256.55" cy="127.04" r="0.68" fill="#1f53c0" fill-opacity="1.00"/><circle cx="267.30" cy="4.40" r="0.76" fill="#1f53c0" fill-opacity="1.00"/><circle cx="267.30" cy="12.07" r="1.06" fill="#1f53c0" fill-opacity="1.00"/><circle cx="267.30" cy="19.73" r="1.35" fill="#1f53c0" fill-opacity="1.00"/><circle cx="267.30" cy="27.40" r="1.64" fill="#1f53c0" fill-opacity="1.00"/><circle cx="267.30" cy="35.06" r="1.93" fill="#1f53c0" fill-opacity="1.00"/><circle cx="267.30" cy="42.73" r="2.21" fill="#1f53c0" fill-opacity="1.00"/><circle cx="267.30" cy="50.39" r="2.47" fill="#1f53c0" fill-opacity="1.00"/><circle cx="267.30" cy="58.06" r="2.69" fill="#1f53c0" fill-opacity="1.00"/><circle cx="267.30" cy="65.72" r="2.80" fill="#1f53c0" fill-opacity="1.00"/><circle cx="267.30" cy="73.38" r="2.70" fill="#1f53c0" fill-opacity="1.00"/><circle cx="267.30" cy="81.05" r="2.49" fill="#1f53c0" fill-opacity="1.00"/><circle cx="267.30" cy="88.72" r="2.23" fill="#1f53c0" fill-opacity="1.00"/><circle cx="267.30" cy="96.38" r="1.95" fill="#1f53c0" fill-opacity="1.00"/><circle cx="267.30" cy="104.05" r="1.66" fill="#1f53c0" fill-opacity="1.00"/><circle cx="267.30" cy="111.71" r="1.37" fill="#1f53c0" fill-opacity="1.00"/><circle cx="267.30" cy="119.38" r="1.08" fill="#1f53c0" fill-opacity="1.00"/><circle cx="267.30" cy="127.04" r="0.78" fill="#1f53c0" fill-opacity="1.00"/><circle cx="278.05" cy="4.40" r="0.80" fill="#1a4fc4" fill-opacity="1.00"/><circle cx="278.05" cy="12.07" r="1.10" fill="#1a4fc4" fill-opacity="1.00"/><circle cx="278.05" cy="19.73" r="1.39" fill="#1a4fc4" fill-opacity="1.00"/><circle cx="278.05" cy="27.40" r="1.69" fill="#1a4fc4" fill-opacity="1.00"/><circle cx="278.05" cy="35.06" r="1.99" fill="#1a4fc4" fill-opacity="1.00"/><circle cx="278.05" cy="42.73" r="2.29" fill="#1a4fc4" fill-opacity="1.00"/><circle cx="278.05" cy="50.39" r="2.59" fill="#1a4fc4" fill-opacity="1.00"/><circle cx="278.05" cy="58.06" r="2.89" fill="#1a4fc4" fill-opacity="1.00"/><circle cx="278.05" cy="65.72" r="3.19" fill="#1a4fc4" fill-opacity="1.00"/><circle cx="278.05" cy="73.38" r="2.91" fill="#1a4fc4" fill-opacity="1.00"/><circle cx="278.05" cy="81.05" r="2.61" fill="#1a4fc4" fill-opacity="1.00"/><circle cx="278.05" cy="88.72" r="2.31" fill="#1a4fc4" fill-opacity="1.00"/><circle cx="278.05" cy="96.38" r="2.01" fill="#1a4fc4" fill-opacity="1.00"/><circle cx="278.05" cy="104.05" r="1.72" fill="#1a4fc4" fill-opacity="1.00"/><circle cx="278.05" cy="111.71" r="1.42" fill="#1a4fc4" fill-opacity="1.00"/><circle cx="278.05" cy="119.38" r="1.12" fill="#1a4fc4" fill-opacity="1.00"/><circle cx="278.05" cy="127.04" r="0.82" fill="#1a4fc4" fill-opacity="1.00"/><circle cx="288.80" cy="4.40" r="0.67" fill="#1a4fc4" fill-opacity="1.00"/><circle cx="288.80" cy="12.07" r="0.93" fill="#1a4fc4" fill-opacity="1.00"/><circle cx="288.80" cy="19.73" r="1.18" fill="#1a4fc4" fill-opacity="1.00"/><circle cx="288.80" cy="27.40" r="1.44" fill="#1a4fc4" fill-opacity="1.00"/><circle cx="288.80" cy="35.06" r="1.69" fill="#1a4fc4" fill-opacity="1.00"/><circle cx="288.80" cy="42.73" r="1.93" fill="#1a4fc4" fill-opacity="1.00"/><circle cx="288.80" cy="50.39" r="2.16" fill="#1a4fc4" fill-opacity="1.00"/><circle cx="288.80" cy="58.06" r="2.36" fill="#1a4fc4" fill-opacity="1.00"/><circle cx="288.80" cy="65.72" r="2.45" fill="#1a4fc4" fill-opacity="1.00"/><circle cx="288.80" cy="73.38" r="2.37" fill="#1a4fc4" fill-opacity="1.00"/><circle cx="288.80" cy="81.05" r="2.18" fill="#1a4fc4" fill-opacity="1.00"/><circle cx="288.80" cy="88.72" r="1.95" fill="#1a4fc4" fill-opacity="1.00"/><circle cx="288.80" cy="96.38" r="1.71" fill="#1a4fc4" fill-opacity="1.00"/><circle cx="288.80" cy="104.05" r="1.46" fill="#1a4fc4" fill-opacity="1.00"/><circle cx="288.80" cy="111.71" r="1.20" fill="#1a4fc4" fill-opacity="1.00"/><circle cx="288.80" cy="119.38" r="0.94" fill="#1a4fc4" fill-opacity="1.00"/><circle cx="288.80" cy="127.04" r="0.69" fill="#1a4fc4" fill-opacity="1.00"/><circle cx="299.55" cy="4.40" r="0.45" fill="#1a4fc4" fill-opacity="1.00"/><circle cx="299.55" cy="12.07" r="0.64" fill="#1a4fc4" fill-opacity="1.00"/><circle cx="299.55" cy="19.73" r="0.83" fill="#1a4fc4" fill-opacity="1.00"/><circle cx="299.55" cy="27.40" r="1.01" fill="#1a4fc4" fill-opacity="1.00"/><circle cx="299.55" cy="35.06" r="1.19" fill="#1a4fc4" fill-opacity="1.00"/><circle cx="299.55" cy="42.73" r="1.35" fill="#1a4fc4" fill-opacity="1.00"/><circle cx="299.55" cy="50.39" r="1.49" fill="#1a4fc4" fill-opacity="1.00"/><circle cx="299.55" cy="58.06" r="1.59" fill="#1a4fc4" fill-opacity="1.00"/><circle cx="299.55" cy="65.72" r="1.63" fill="#1a4fc4" fill-opacity="1.00"/><circle cx="299.55" cy="73.38" r="1.59" fill="#1a4fc4" fill-opacity="1.00"/><circle cx="299.55" cy="81.05" r="1.50" fill="#1a4fc4" fill-opacity="1.00"/><circle cx="299.55" cy="88.72" r="1.36" fill="#1a4fc4" fill-opacity="1.00"/><circle cx="299.55" cy="96.38" r="1.20" fill="#1a4fc4" fill-opacity="1.00"/><circle cx="299.55" cy="104.05" r="1.03" fill="#1a4fc4" fill-opacity="1.00"/><circle cx="299.55" cy="111.71" r="0.84" fill="#1a4fc4" fill-opacity="1.00"/><circle cx="299.55" cy="119.38" r="0.66" fill="#1a4fc4" fill-opacity="1.00"/><circle cx="299.55" cy="127.04" r="0.47" fill="#1a4fc4" fill-opacity="1.00"/><circle cx="310.30" cy="4.40" r="0.35" fill="#1a4fc4" fill-opacity="0.79"/><circle cx="310.30" cy="12.07" r="0.37" fill="#1a4fc4" fill-opacity="0.79"/><circle cx="310.30" cy="19.73" r="0.50" fill="#1a4fc4" fill-opacity="0.79"/><circle cx="310.30" cy="27.40" r="0.61" fill="#1a4fc4" fill-opacity="0.79"/><circle cx="310.30" cy="35.06" r="0.72" fill="#1a4fc4" fill-opacity="0.79"/><circle cx="310.30" cy="42.73" r="0.82" fill="#1a4fc4" fill-opacity="0.79"/><circle cx="310.30" cy="50.39" r="0.89" fill="#1a4fc4" fill-opacity="0.79"/><circle cx="310.30" cy="58.06" r="0.94" fill="#1a4fc4" fill-opacity="0.79"/><circle cx="310.30" cy="65.72" r="0.96" fill="#1a4fc4" fill-opacity="0.79"/><circle cx="310.30" cy="73.38" r="0.95" fill="#1a4fc4" fill-opacity="0.79"/><circle cx="310.30" cy="81.05" r="0.90" fill="#1a4fc4" fill-opacity="0.79"/><circle cx="310.30" cy="88.72" r="0.82" fill="#1a4fc4" fill-opacity="0.79"/><circle cx="310.30" cy="96.38" r="0.73" fill="#1a4fc4" fill-opacity="0.79"/><circle cx="310.30" cy="104.05" r="0.62" fill="#1a4fc4" fill-opacity="0.79"/><circle cx="310.30" cy="111.71" r="0.51" fill="#1a4fc4" fill-opacity="0.79"/><circle cx="310.30" cy="119.38" r="0.38" fill="#1a4fc4" fill-opacity="0.79"/><circle cx="310.30" cy="127.04" r="0.35" fill="#1a4fc4" fill-opacity="0.79"/><circle cx="321.05" cy="4.40" r="0.35" fill="#1a4fc4" fill-opacity="0.58"/><circle cx="321.05" cy="12.07" r="0.35" fill="#1a4fc4" fill-opacity="0.58"/><circle cx="321.05" cy="19.73" r="0.35" fill="#1a4fc4" fill-opacity="0.58"/><circle cx="321.05" cy="27.40" r="0.35" fill="#1a4fc4" fill-opacity="0.58"/><circle cx="321.05" cy="35.06" r="0.35" fill="#1a4fc4" fill-opacity="0.58"/><circle cx="321.05" cy="42.73" r="0.40" fill="#1a4fc4" fill-opacity="0.58"/><circle cx="321.05" cy="50.39" r="0.44" fill="#1a4fc4" fill-opacity="0.58"/><circle cx="321.05" cy="58.06" r="0.46" fill="#1a4fc4" fill-opacity="0.58"/><circle cx="321.05" cy="65.72" r="0.47" fill="#1a4fc4" fill-opacity="0.58"/><circle cx="321.05" cy="73.38" r="0.47" fill="#1a4fc4" fill-opacity="0.58"/><circle cx="321.05" cy="81.05" r="0.44" fill="#1a4fc4" fill-opacity="0.58"/><circle cx="321.05" cy="88.72" r="0.41" fill="#1a4fc4" fill-opacity="0.58"/><circle cx="321.05" cy="96.38" r="0.36" fill="#1a4fc4" fill-opacity="0.58"/><circle cx="321.05" cy="104.05" r="0.35" fill="#1a4fc4" fill-opacity="0.58"/><circle cx="321.05" cy="111.71" r="0.35" fill="#1a4fc4" fill-opacity="0.58"/><circle cx="321.05" cy="119.38" r="0.35" fill="#1a4fc4" fill-opacity="0.58"/><circle cx="321.05" cy="127.04" r="0.35" fill="#1a4fc4" fill-opacity="0.58"/></svg>
<svg style="left:648px;top:217.7px" width="260.5" height="260.3" viewBox="0 0 260 260">
<defs>
<clipPath id="ic"><rect width="260" height="260" rx="15"/></clipPath>
<clipPath id="hc"><path d="M90 176 Q72 165 70 145 Q60 125 62 98 Q66 62 96 46 Q120 36 145 40 Q176 46 188 72 Q196 88 196 104 Q204 116 206 129 Q202 134 198 137 Q200 142 197 146 Q199 152 196 157 Q192 170 180 176 Q165 180 152 190 Q120 176 90 176Z"/></clipPath>
<linearGradient id="bgv" x1="0" y1="0" x2="0" y2="1">
<stop offset="0" stop-color="#06162b"/><stop offset="0.04" stop-color="#0b2b52"/><stop offset="0.12" stop-color="#12467a"/><stop offset="0.3" stop-color="#1b5a98"/><stop offset="0.5" stop-color="#2670b4"/><stop offset="0.64" stop-color="#4592d2"/><stop offset="0.73" stop-color="#86c6ee"/><stop offset="0.8" stop-color="#b8e2f8"/><stop offset="0.86" stop-color="#c6e9fa"/><stop offset="0.875" stop-color="#4a87c0"/><stop offset="1" stop-color="#2d6aa6"/>
</linearGradient>
<linearGradient id="bgh" x1="0" y1="0" x2="1" y2="0">
<stop offset="0" stop-color="#041634" stop-opacity="0.3"/><stop offset="0.4" stop-color="#041634" stop-opacity="0"/><stop offset="1" stop-color="#4aa0e0" stop-opacity="0.12"/>
</linearGradient>
<radialGradient id="glow" cx="0.55" cy="0.42" r="0.5">
<stop offset="0" stop-color="#9fd8ff" stop-opacity="0.3"/><stop offset="0.7" stop-color="#7fc0f0" stop-opacity="0.1"/><stop offset="1" stop-color="#7fb8e6" stop-opacity="0"/>
</radialGradient>
<radialGradient id="headg" cx="0.42" cy="0.45" r="0.62">
<stop offset="0" stop-color="#1f4f82"/><stop offset="0.5" stop-color="#2f6aa6"/><stop offset="0.8" stop-color="#5c9ad0"/><stop offset="1" stop-color="#a6d6f5"/>
</radialGradient>
<linearGradient id="facel" x1="0" y1="0" x2="1" y2="0">
<stop offset="0.55" stop-color="#bfe6ff" stop-opacity="0"/><stop offset="1" stop-color="#d8f0ff" stop-opacity="0.55"/>
</linearGradient>
<linearGradient id="neck" x1="0" y1="0" x2="0" y2="1"><stop offset="0" stop-color="#1f4774"/><stop offset="1" stop-color="#172c48"/></linearGradient>
</defs>
<g clip-path="url(#ic)">
<rect width="260" height="260" fill="url(#bgv)"/>
<rect width="260" height="260" fill="url(#bgh)"/>
<rect width="260" height="260" fill="url(#glow)"/>
<g stroke="#8fd3ff" stroke-opacity="0.45" fill="none" stroke-width="0.8">
<path d="M0 12H260M0 62H70M180 62H260M0 140H60M190 140H260M8 12V130M50 12V80M100 12V42M172 12V50M222 12V70M254 12V200M0 182H60M195 200H260M60 70V140M200 70V140"/>
<rect x="5" y="150" width="50" height="60"/><rect x="190" y="150" width="60" height="48"/><rect x="180" y="20" width="70" height="30"/><rect x="8" y="96" width="46" height="40"/>
</g>
<g stroke="#d4eeff" fill="none">
<path d="M14 38q6-14 10-4t6 2 10 0" stroke-width="1.4" stroke="#d8c7ae"/>
<path d="M72 40l8-16 6 12 8-14 8 18" stroke-width="1.2"/>
<path d="M148 44l10-10 8 6 8-4 8 4" stroke-width="1.1" stroke-opacity="0.8"/>
<path d="M182 40l20-18M188 44l20-18" stroke-width="1" stroke-opacity="0.7"/>
<circle cx="20" cy="62" r="14" stroke-width="1.1" stroke-opacity="0.75"/><circle cx="20" cy="62" r="7" stroke-width="1" stroke-opacity="0.6"/>
<path d="M14 100v28M20 120l8-6 8 4 8 8" stroke-width="1" stroke-opacity="0.65"/>
<path d="M22 152l10-6 10 6v12l-10 6-10-6z" stroke-width="1.8" stroke-opacity="0.7"/>
<circle cx="52" cy="150" r="9" stroke-width="2.5" stroke-opacity="0.75"/>
<path d="M8 176l10-6 12 6v16l-12 6-10-6z" stroke-width="1.4" stroke-opacity="0.6"/>
<circle cx="19" cy="183" r="5" stroke-width="1.5" stroke-opacity="0.6"/>
<circle cx="42" cy="176" r="4" stroke-width="1.4"/><circle cx="58" cy="176" r="4" stroke-width="1.4"/>
<path d="M60 192v12M48 202h24" stroke-width="1.4"/><circle cx="60" cy="209" r="5" stroke-width="1.8"/>
<path d="M24 210v-14M28 210v-20M32 210v-10M36 210v-18M40 210v-8" stroke-width="1.2" stroke-opacity="0.8"/>
<circle cx="230" cy="180" r="9" stroke-width="3" stroke-opacity="0.6"/>
<path d="M192 160l10 8 12-6 14 8 12-10" stroke-width="0.9" stroke-opacity="0.7"/>
</g>
<circle cx="53" cy="41" r="12" fill="#5c7d9c" fill-opacity="0.7" stroke="#cfe6f6" stroke-width="1.2"/>
<g fill="#bfe6ff" fill-opacity="0.9"><circle cx="40" cy="48" r="4"/><circle cx="48" cy="56" r="3"/><circle cx="250" cy="52" r="2.5"/><circle cx="214" cy="118" r="2"/></g>
<path d="M196 54l12-7 12 7v14l-12 7-12-7z" fill="#2d5f92" stroke="#d9efff" stroke-width="1.6"/><circle cx="208" cy="61" r="4.5" fill="#eaf6ff"/>
<ellipse cx="241" cy="45" rx="11" ry="12" fill="#3a6e9f" stroke="#e6f4ff" stroke-width="1.3"/><circle cx="241" cy="44" r="5" fill="#e6f2fa"/>
<circle cx="225" cy="88" r="15" fill="#2f6ba3" stroke="#d9efff" stroke-width="1.3"/><rect x="217" y="86" width="16" height="11" rx="1.5" fill="#eef8ff"/><path d="M220 86v-4a5 5 0 0 1 10 0v4" fill="none" stroke="#eef8ff" stroke-width="2"/>
<rect x="0" y="188" width="260" height="36" fill="#d8f0ff" fill-opacity="0.3"/>
<rect x="0" y="188" width="60" height="4" fill="#f0a860" fill-opacity="0.4"/>
<path d="M85 168 Q95 176 100 166 L152 176 Q152 200 160 230 L80 230Z" fill="url(#neck)"/>
<path d="M90 176v52M97 180v48M104 174v54M111 184v44M118 178v50M125 186v42M132 180v48M139 188v40M146 182v46M153 196v32" stroke="#8fcaf2" stroke-opacity="0.55" stroke-width="1.3"/>
<rect x="118" y="204" width="8" height="24" fill="#dfeaf2" fill-opacity="0.75"/><rect x="134" y="210" width="7" height="18" fill="#cfdbe6" fill-opacity="0.7"/><rect x="104" y="214" width="6" height="14" fill="#b8cfe0" fill-opacity="0.6"/>
<path d="M90 176 Q72 165 70 145 Q60 125 62 98 Q66 62 96 46 Q120 36 145 40 Q176 46 188 72 Q196 88 196 104 Q204 116 206 129 Q202 134 198 137 Q200 142 197 146 Q199 152 196 157 Q192 170 180 176 Q165 180 152 190 Q120 176 90 176Z" fill="url(#headg)"/>
<g clip-path="url(#hc)"><circle cx="108.6" cy="62.6" r="0.4" fill="#e6f6ff" fill-opacity="0.54"/><circle cx="139.2" cy="94.9" r="0.4" fill="#e6f6ff" fill-opacity="0.95"/><circle cx="92.9" cy="52.9" r="0.8" fill="#e6f6ff" fill-opacity="0.53"/><circle cx="75.1" cy="103.7" r="0.4" fill="#e6f6ff" fill-opacity="0.97"/><circle cx="152.8" cy="127.4" r="0.4" fill="#e6f6ff" fill-opacity="0.79"/><circle cx="119.1" cy="186.4" r="0.4" fill="#e6f6ff" fill-opacity="0.78"/><circle cx="81.2" cy="102.9" r="0.4" fill="#e6f6ff" fill-opacity="0.79"/><circle cx="142.7" cy="142.3" r="0.4" fill="#e6f6ff" fill-opacity="0.79"/><circle cx="154.0" cy="95.9" r="0.4" fill="#e6f6ff" fill-opacity="0.78"/><circle cx="151.1" cy="114.5" r="0.8" fill="#e6f6ff" fill-opacity="0.89"/><circle cx="129.0" cy="178.5" r="0.6" fill="#e6f6ff" fill-opacity="0.65"/><circle cx="176.4" cy="144.8" r="0.5" fill="#e6f6ff" fill-opacity="0.54"/><circle cx="105.2" cy="114.3" r="0.6" fill="#e6f6ff" fill-opacity="0.86"/><circle cx="103.5" cy="187.0" r="0.4" fill="#e6f6ff" fill-opacity="0.76"/><circle cx="85.8" cy="91.3" r="0.8" fill="#e6f6ff" fill-opacity="0.71"/><circle cx="200.5" cy="51.6" r="0.6" fill="#e6f6ff" fill-opacity="0.67"/><circle cx="112.4" cy="114.5" r="0.8" fill="#e6f6ff" fill-opacity="0.53"/><circle cx="75.5" cy="80.5" r="0.4" fill="#e6f6ff" fill-opacity="0.53"/><circle cx="163.0" cy="137.1" r="0.8" fill="#e6f6ff" fill-opacity="0.64"/><circle cx="117.6" cy="140.3" r="0.4" fill="#e6f6ff" fill-opacity="0.97"/><circle cx="113.2" cy="131.6" r="0.8" fill="#e6f6ff" fill-opacity="0.53"/><circle cx="172.6" cy="59.4" r="0.5" fill="#e6f6ff" fill-opacity="0.70"/><circle cx="194.0" cy="114.5" r="0.5" fill="#e6f6ff" fill-opacity="0.72"/><circle cx="141.1" cy="172.5" r="0.8" fill="#e6f6ff" fill-opacity="0.93"/><circle cx="102.1" cy="102.3" r="0.6" fill="#e6f6ff" fill-opacity="0.84"/><circle cx="116.8" cy="74.6" r="0.4" fill="#e6f6ff" fill-opacity="0.59"/><circle cx="95.4" cy="75.0" r="0.8" fill="#e6f6ff" fill-opacity="0.92"/><circle cx="88.3" cy="82.3" r="0.5" fill="#e6f6ff" fill-opacity="0.71"/><circle cx="115.2" cy="125.0" r="0.5" fill="#e6f6ff" fill-opacity="0.85"/><circle cx="136.2" cy="132.6" r="0.4" fill="#e6f6ff" fill-opacity="0.73"/><circle cx="187.4" cy="182.8" r="0.8" fill="#e6f6ff" fill-opacity="0.70"/><circle cx="118.8" cy="112.2" r="0.8" fill="#e6f6ff" fill-opacity="0.53"/><circle cx="71.7" cy="71.3" r="0.5" fill="#e6f6ff" fill-opacity="0.55"/><circle cx="148.5" cy="55.4" r="0.5" fill="#e6f6ff" fill-opacity="0.77"/><circle cx="198.6" cy="132.1" r="0.4" fill="#e6f6ff" fill-opacity="0.94"/><circle cx="150.4" cy="62.3" r="0.6" fill="#e6f6ff" fill-opacity="0.98"/><circle cx="148.7" cy="111.1" r="0.4" fill="#e6f6ff" fill-opacity="0.92"/><circle cx="205.0" cy="109.9" r="0.8" fill="#e6f6ff" fill-opacity="0.66"/><circle cx="82.8" cy="152.5" r="0.6" fill="#e6f6ff" fill-opacity="0.74"/><circle cx="161.7" cy="117.5" r="0.5" fill="#e6f6ff" fill-opacity="0.98"/><circle cx="138.1" cy="62.0" r="0.4" fill="#e6f6ff" fill-opacity="0.88"/><circle cx="104.9" cy="136.4" r="0.4" fill="#e6f6ff" fill-opacity="0.85"/><circle cx="99.6" cy="95.0" r="0.5" fill="#e6f6ff" fill-opacity="0.68"/><circle cx="94.1" cy="121.2" r="0.6" fill="#e6f6ff" fill-opacity="0.82"/><circle cx="150.3" cy="158.3" r="0.5" fill="#e6f6ff" fill-opacity="0.90"/><circle cx="179.8" cy="151.0" r="0.5" fill="#e6f6ff" fill-opacity="0.60"/><circle cx="133.0" cy="149.7" r="0.4" fill="#e6f6ff" fill-opacity="0.90"/><circle cx="130.0" cy="69.0" r="0.6" fill="#e6f6ff" fill-opacity="0.72"/><circle cx="196.9" cy="188.2" r="0.6" fill="#e6f6ff" fill-opacity="0.54"/><circle cx="76.7" cy="110.5" r="0.6" fill="#e6f6ff" fill-opacity="0.60"/><circle cx="151.9" cy="175.0" r="0.4" fill="#e6f6ff" fill-opacity="0.74"/><circle cx="156.0" cy="159.9" r="0.4" fill="#e6f6ff" fill-opacity="0.92"/><circle cx="79.3" cy="98.3" r="0.5" fill="#e6f6ff" fill-opacity="0.74"/><circle cx="87.7" cy="158.4" r="0.6" fill="#e6f6ff" fill-opacity="0.54"/><circle cx="198.2" cy="148.3" r="0.8" fill="#e6f6ff" fill-opacity="0.70"/><circle cx="198.3" cy="148.7" r="0.5" fill="#e6f6ff" fill-opacity="1.00"/><circle cx="66.0" cy="128.6" r="0.8" fill="#e6f6ff" fill-opacity="0.90"/><circle cx="83.0" cy="164.0" r="0.8" fill="#e6f6ff" fill-opacity="0.83"/><circle cx="112.5" cy="122.3" r="0.5" fill="#e6f6ff" fill-opacity="0.51"/><circle cx="177.1" cy="149.0" r="0.4" fill="#e6f6ff" fill-opacity="0.76"/><circle cx="196.4" cy="105.1" r="0.5" fill="#e6f6ff" fill-opacity="0.91"/><circle cx="92.4" cy="77.8" r="0.6" fill="#e6f6ff" fill-opacity="0.75"/><circle cx="172.0" cy="88.9" r="0.8" fill="#e6f6ff" fill-opacity="0.92"/><circle cx="70.8" cy="151.0" r="0.8" fill="#e6f6ff" fill-opacity="0.83"/><circle cx="179.4" cy="117.5" r="0.5" fill="#e6f6ff" fill-opacity="0.77"/><circle cx="137.4" cy="42.8" r="0.8" fill="#e6f6ff" fill-opacity="0.89"/><circle cx="149.6" cy="156.4" r="0.5" fill="#e6f6ff" fill-opacity="0.59"/><circle cx="130.2" cy="148.8" r="0.4" fill="#e6f6ff" fill-opacity="0.66"/><circle cx="136.6" cy="123.3" r="0.4" fill="#e6f6ff" fill-opacity="0.94"/><circle cx="70.2" cy="68.7" r="0.4" fill="#e6f6ff" fill-opacity="0.89"/><circle cx="135.1" cy="124.3" r="0.4" fill="#e6f6ff" fill-opacity="0.72"/><circle cx="150.2" cy="115.8" r="0.5" fill="#e6f6ff" fill-opacity="0.85"/><circle cx="127.1" cy="120.0" r="0.8" fill="#e6f6ff" fill-opacity="0.75"/><circle cx="97.7" cy="118.5" r="0.6" fill="#e6f6ff" fill-opacity="0.96"/><circle cx="190.6" cy="70.4" r="0.8" fill="#e6f6ff" fill-opacity="0.57"/><circle cx="79.5" cy="106.3" r="0.4" fill="#e6f6ff" fill-opacity="0.84"/><circle cx="123.7" cy="71.9" r="0.6" fill="#e6f6ff" fill-opacity="0.89"/><circle cx="191.2" cy="63.2" r="0.6" fill="#e6f6ff" fill-opacity="0.57"/><circle cx="189.1" cy="185.1" r="0.5" fill="#e6f6ff" fill-opacity="0.87"/><circle cx="75.6" cy="172.7" r="0.5" fill="#e6f6ff" fill-opacity="0.99"/><circle cx="181.9" cy="64.2" r="0.8" fill="#e6f6ff" fill-opacity="1.00"/><circle cx="120.1" cy="103.2" r="0.6" fill="#e6f6ff" fill-opacity="0.66"/><circle cx="166.0" cy="42.9" r="0.8" fill="#e6f6ff" fill-opacity="0.72"/><circle cx="64.6" cy="89.7" r="0.6" fill="#e6f6ff" fill-opacity="0.76"/><circle cx="71.3" cy="187.8" r="0.5" fill="#e6f6ff" fill-opacity="0.99"/><circle cx="77.1" cy="79.8" r="0.4" fill="#e6f6ff" fill-opacity="0.95"/><circle cx="88.1" cy="153.4" r="0.8" fill="#e6f6ff" fill-opacity="0.92"/><circle cx="159.3" cy="181.9" r="0.8" fill="#e6f6ff" fill-opacity="0.57"/><circle cx="194.4" cy="125.6" r="0.6" fill="#e6f6ff" fill-opacity="0.54"/><circle cx="70.3" cy="143.2" r="0.8" fill="#e6f6ff" fill-opacity="0.95"/><circle cx="100.7" cy="42.5" r="0.4" fill="#e6f6ff" fill-opacity="0.90"/><circle cx="74.1" cy="168.4" r="0.4" fill="#e6f6ff" fill-opacity="0.63"/><circle cx="79.5" cy="41.7" r="0.8" fill="#e6f6ff" fill-opacity="0.96"/><circle cx="100.6" cy="59.4" r="0.5" fill="#e6f6ff" fill-opacity="0.97"/><circle cx="201.6" cy="79.3" r="0.5" fill="#e6f6ff" fill-opacity="0.60"/><circle cx="106.9" cy="85.8" r="0.5" fill="#e6f6ff" fill-opacity="0.64"/><circle cx="134.0" cy="66.7" r="0.6" fill="#e6f6ff" fill-opacity="0.90"/><circle cx="205.2" cy="45.5" r="0.4" fill="#e6f6ff" fill-opacity="0.87"/><circle cx="141.4" cy="68.4" r="0.8" fill="#e6f6ff" fill-opacity="0.62"/><circle cx="126.4" cy="138.7" r="0.8" fill="#e6f6ff" fill-opacity="0.83"/><circle cx="140.6" cy="173.3" r="0.6" fill="#e6f6ff" fill-opacity="0.84"/><circle cx="203.5" cy="91.4" r="0.5" fill="#e6f6ff" fill-opacity="0.70"/><circle cx="112.0" cy="48.2" r="0.5" fill="#e6f6ff" fill-opacity="0.51"/><circle cx="152.1" cy="172.0" r="0.8" fill="#e6f6ff" fill-opacity="0.58"/><circle cx="74.2" cy="166.2" r="0.6" fill="#e6f6ff" fill-opacity="0.80"/><circle cx="161.7" cy="46.8" r="0.5" fill="#e6f6ff" fill-opacity="0.58"/><circle cx="126.2" cy="79.5" r="0.6" fill="#e6f6ff" fill-opacity="0.99"/><circle cx="140.8" cy="76.7" r="0.6" fill="#e6f6ff" fill-opacity="0.61"/><circle cx="88.3" cy="90.3" r="0.4" fill="#e6f6ff" fill-opacity="0.74"/><circle cx="134.4" cy="70.1" r="0.4" fill="#e6f6ff" fill-opacity="0.55"/><circle cx="179.7" cy="61.6" r="0.4" fill="#e6f6ff" fill-opacity="0.70"/><circle cx="105.1" cy="134.5" r="0.4" fill="#e6f6ff" fill-opacity="0.79"/><circle cx="138.2" cy="152.6" r="0.8" fill="#e6f6ff" fill-opacity="0.88"/><circle cx="165.8" cy="114.1" r="0.6" fill="#e6f6ff" fill-opacity="0.86"/><circle cx="154.6" cy="46.6" r="0.8" fill="#e6f6ff" fill-opacity="0.87"/><circle cx="179.0" cy="60.9" r="0.4" fill="#e6f6ff" fill-opacity="0.91"/><circle cx="146.1" cy="173.9" r="0.5" fill="#e6f6ff" fill-opacity="0.54"/><circle cx="68.0" cy="135.6" r="0.4" fill="#e6f6ff" fill-opacity="0.69"/><circle cx="127.0" cy="47.6" r="0.4" fill="#e6f6ff" fill-opacity="0.81"/><circle cx="160.0" cy="113.4" r="0.4" fill="#e6f6ff" fill-opacity="0.73"/><circle cx="72.1" cy="179.9" r="0.4" fill="#e6f6ff" fill-opacity="0.83"/><circle cx="71.5" cy="150.5" r="0.6" fill="#e6f6ff" fill-opacity="0.90"/><circle cx="183.8" cy="75.2" r="0.5" fill="#e6f6ff" fill-opacity="0.62"/><circle cx="155.6" cy="109.1" r="0.8" fill="#e6f6ff" fill-opacity="0.54"/><circle cx="193.1" cy="83.1" r="0.4" fill="#e6f6ff" fill-opacity="0.81"/><circle cx="154.6" cy="51.6" r="0.5" fill="#e6f6ff" fill-opacity="0.67"/><circle cx="155.8" cy="143.9" r="0.5" fill="#e6f6ff" fill-opacity="0.51"/><circle cx="70.7" cy="80.3" r="0.4" fill="#e6f6ff" fill-opacity="0.85"/><circle cx="159.3" cy="83.6" r="0.6" fill="#e6f6ff" fill-opacity="0.73"/><circle cx="129.2" cy="57.8" r="0.5" fill="#e6f6ff" fill-opacity="0.66"/><circle cx="74.4" cy="110.9" r="0.6" fill="#e6f6ff" fill-opacity="0.73"/><circle cx="180.1" cy="185.2" r="0.8" fill="#e6f6ff" fill-opacity="1.00"/><circle cx="117.7" cy="177.5" r="0.5" fill="#e6f6ff" fill-opacity="0.54"/><circle cx="75.0" cy="152.1" r="0.6" fill="#e6f6ff" fill-opacity="0.98"/><circle cx="81.1" cy="163.0" r="0.6" fill="#e6f6ff" fill-opacity="0.94"/><circle cx="163.3" cy="74.7" r="0.8" fill="#e6f6ff" fill-opacity="0.70"/><circle cx="84.9" cy="182.5" r="0.8" fill="#e6f6ff" fill-opacity="0.70"/><circle cx="166.7" cy="102.4" r="0.8" fill="#e6f6ff" fill-opacity="0.66"/><circle cx="183.0" cy="40.3" r="0.6" fill="#e6f6ff" fill-opacity="0.92"/><circle cx="79.3" cy="179.0" r="0.4" fill="#e6f6ff" fill-opacity="0.95"/><circle cx="103.7" cy="95.8" r="0.8" fill="#e6f6ff" fill-opacity="0.70"/><circle cx="187.3" cy="51.5" r="0.8" fill="#e6f6ff" fill-opacity="0.88"/><circle cx="185.0" cy="82.1" r="0.4" fill="#e6f6ff" fill-opacity="0.92"/><circle cx="103.1" cy="180.3" r="0.5" fill="#e6f6ff" fill-opacity="0.99"/><circle cx="124.8" cy="87.3" r="0.6" fill="#e6f6ff" fill-opacity="0.89"/><circle cx="123.6" cy="44.4" r="0.8" fill="#e6f6ff" fill-opacity="0.96"/><circle cx="197.5" cy="122.4" r="0.4" fill="#e6f6ff" fill-opacity="0.52"/><circle cx="167.5" cy="107.6" r="0.5" fill="#e6f6ff" fill-opacity="0.82"/><circle cx="103.2" cy="47.3" r="0.5" fill="#e6f6ff" fill-opacity="0.59"/><circle cx="121.7" cy="82.3" r="0.6" fill="#e6f6ff" fill-opacity="0.87"/><circle cx="202.6" cy="79.0" r="0.5" fill="#e6f6ff" fill-opacity="0.65"/><circle cx="142.3" cy="99.2" r="0.5" fill="#e6f6ff" fill-opacity="0.82"/><circle cx="72.8" cy="115.1" r="0.8" fill="#e6f6ff" fill-opacity="0.78"/><circle cx="127.2" cy="89.9" r="0.8" fill="#e6f6ff" fill-opacity="0.71"/><circle cx="140.9" cy="76.6" r="0.5" fill="#e6f6ff" fill-opacity="0.67"/><circle cx="75.1" cy="75.9" r="0.6" fill="#e6f6ff" fill-opacity="0.90"/><circle cx="91.1" cy="43.0" r="0.8" fill="#e6f6ff" fill-opacity="0.69"/><circle cx="169.4" cy="71.5" r="0.6" fill="#e6f6ff" fill-opacity="0.67"/><circle cx="70.9" cy="81.6" r="0.6" fill="#e6f6ff" fill-opacity="0.56"/><circle cx="134.5" cy="134.4" r="0.5" fill="#e6f6ff" fill-opacity="0.55"/><circle cx="191.1" cy="97.7" r="0.8" fill="#e6f6ff" fill-opacity="0.72"/><circle cx="106.9" cy="162.2" r="0.4" fill="#e6f6ff" fill-opacity="0.56"/><circle cx="123.2" cy="154.6" r="0.8" fill="#e6f6ff" fill-opacity="0.98"/><circle cx="132.5" cy="51.0" r="0.8" fill="#e6f6ff" fill-opacity="0.99"/><circle cx="97.8" cy="56.4" r="0.5" fill="#e6f6ff" fill-opacity="0.58"/><circle cx="202.0" cy="56.3" r="0.8" fill="#e6f6ff" fill-opacity="0.54"/><circle cx="173.9" cy="40.2" r="0.5" fill="#e6f6ff" fill-opacity="0.62"/><circle cx="194.5" cy="136.8" r="0.6" fill="#e6f6ff" fill-opacity="0.98"/><circle cx="152.2" cy="119.2" r="0.8" fill="#e6f6ff" fill-opacity="0.85"/><circle cx="78.1" cy="50.6" r="0.5" fill="#e6f6ff" fill-opacity="0.69"/><circle cx="94.2" cy="130.2" r="0.4" fill="#e6f6ff" fill-opacity="0.77"/><circle cx="205.5" cy="81.8" r="0.6" fill="#e6f6ff" fill-opacity="0.82"/><circle cx="189.3" cy="111.3" r="0.5" fill="#e6f6ff" fill-opacity="0.77"/><circle cx="66.2" cy="101.8" r="0.6" fill="#e6f6ff" fill-opacity="0.53"/><circle cx="90.0" cy="172.7" r="0.8" fill="#e6f6ff" fill-opacity="0.54"/><circle cx="94.8" cy="103.6" r="0.6" fill="#e6f6ff" fill-opacity="0.61"/><circle cx="66.9" cy="90.7" r="0.8" fill="#e6f6ff" fill-opacity="0.68"/><circle cx="119.1" cy="41.0" r="0.6" fill="#e6f6ff" fill-opacity="0.87"/><circle cx="134.7" cy="70.8" r="0.5" fill="#e6f6ff" fill-opacity="0.66"/><circle cx="180.1" cy="74.6" r="0.5" fill="#e6f6ff" fill-opacity="0.63"/><circle cx="190.1" cy="56.4" r="0.8" fill="#e6f6ff" fill-opacity="0.81"/><circle cx="191.1" cy="112.8" r="0.4" fill="#e6f6ff" fill-opacity="0.97"/><circle cx="83.1" cy="99.0" r="0.5" fill="#e6f6ff" fill-opacity="0.51"/><circle cx="147.8" cy="102.3" r="0.4" fill="#e6f6ff" fill-opacity="0.59"/><circle cx="126.7" cy="146.8" r="0.6" fill="#e6f6ff" fill-opacity="0.87"/><circle cx="205.6" cy="179.7" r="0.6" fill="#e6f6ff" fill-opacity="0.60"/><circle cx="156.0" cy="118.7" r="0.8" fill="#e6f6ff" fill-opacity="0.52"/><circle cx="157.7" cy="96.8" r="0.6" fill="#e6f6ff" fill-opacity="0.99"/><circle cx="125.7" cy="56.3" r="0.4" fill="#e6f6ff" fill-opacity="0.64"/><circle cx="112.6" cy="183.3" r="0.4" fill="#e6f6ff" fill-opacity="0.78"/><circle cx="171.3" cy="97.0" r="0.6" fill="#e6f6ff" fill-opacity="0.91"/><circle cx="124.3" cy="47.4" r="0.8" fill="#e6f6ff" fill-opacity="0.60"/><circle cx="140.0" cy="107.0" r="0.6" fill="#e6f6ff" fill-opacity="0.68"/><circle cx="191.2" cy="44.5" r="0.8" fill="#e6f6ff" fill-opacity="0.62"/><circle cx="152.1" cy="100.7" r="0.8" fill="#e6f6ff" fill-opacity="0.52"/><circle cx="71.0" cy="178.0" r="0.6" fill="#e6f6ff" fill-opacity="0.60"/><circle cx="71.1" cy="130.8" r="0.6" fill="#e6f6ff" fill-opacity="0.64"/><circle cx="199.9" cy="132.5" r="0.6" fill="#e6f6ff" fill-opacity="0.87"/><circle cx="161.3" cy="178.6" r="0.6" fill="#e6f6ff" fill-opacity="0.50"/><circle cx="170.8" cy="177.5" r="0.4" fill="#e6f6ff" fill-opacity="0.51"/><circle cx="95.7" cy="111.3" r="0.8" fill="#e6f6ff" fill-opacity="0.98"/><circle cx="117.7" cy="77.7" r="0.8" fill="#e6f6ff" fill-opacity="0.91"/><circle cx="81.1" cy="114.5" r="0.4" fill="#e6f6ff" fill-opacity="0.90"/><circle cx="168.3" cy="163.4" r="0.5" fill="#e6f6ff" fill-opacity="0.80"/><circle cx="109.2" cy="87.9" r="0.6" fill="#e6f6ff" fill-opacity="0.89"/><circle cx="147.8" cy="116.8" r="0.8" fill="#e6f6ff" fill-opacity="0.88"/><circle cx="97.6" cy="49.7" r="0.4" fill="#e6f6ff" fill-opacity="0.74"/><circle cx="140.4" cy="64.1" r="0.8" fill="#e6f6ff" fill-opacity="0.94"/><circle cx="204.2" cy="79.7" r="0.4" fill="#e6f6ff" fill-opacity="0.60"/><circle cx="122.6" cy="188.3" r="0.8" fill="#e6f6ff" fill-opacity="0.59"/><circle cx="81.1" cy="109.1" r="0.5" fill="#e6f6ff" fill-opacity="0.87"/><circle cx="184.0" cy="139.7" r="0.4" fill="#e6f6ff" fill-opacity="0.89"/><circle cx="104.3" cy="81.9" r="0.6" fill="#e6f6ff" fill-opacity="0.69"/><circle cx="168.3" cy="69.9" r="0.5" fill="#e6f6ff" fill-opacity="0.59"/><circle cx="95.9" cy="82.2" r="0.5" fill="#e6f6ff" fill-opacity="0.66"/><circle cx="119.0" cy="188.9" r="0.5" fill="#e6f6ff" fill-opacity="0.82"/><circle cx="76.5" cy="109.6" r="0.4" fill="#e6f6ff" fill-opacity="0.55"/><circle cx="130.4" cy="162.9" r="0.8" fill="#e6f6ff" fill-opacity="0.96"/><circle cx="67.8" cy="84.1" r="0.4" fill="#e6f6ff" fill-opacity="0.53"/><circle cx="148.5" cy="164.2" r="0.5" fill="#e6f6ff" fill-opacity="0.97"/><circle cx="115.6" cy="169.9" r="0.8" fill="#e6f6ff" fill-opacity="0.80"/><circle cx="173.6" cy="139.7" r="0.4" fill="#e6f6ff" fill-opacity="0.55"/><circle cx="147.8" cy="133.0" r="0.5" fill="#e6f6ff" fill-opacity="0.52"/><circle cx="111.0" cy="46.6" r="0.6" fill="#e6f6ff" fill-opacity="0.52"/><circle cx="167.4" cy="177.1" r="0.4" fill="#e6f6ff" fill-opacity="0.91"/><circle cx="120.9" cy="95.8" r="0.6" fill="#e6f6ff" fill-opacity="0.54"/><circle cx="66.5" cy="114.3" r="0.8" fill="#e6f6ff" fill-opacity="0.53"/><circle cx="76.6" cy="99.3" r="0.5" fill="#e6f6ff" fill-opacity="0.82"/><circle cx="75.1" cy="64.6" r="0.6" fill="#e6f6ff" fill-opacity="0.70"/><circle cx="102.8" cy="86.1" r="0.4" fill="#e6f6ff" fill-opacity="0.66"/><circle cx="143.6" cy="93.6" r="0.8" fill="#e6f6ff" fill-opacity="0.51"/><circle cx="172.4" cy="160.3" r="0.5" fill="#e6f6ff" fill-opacity="0.70"/><circle cx="120.3" cy="181.3" r="0.8" fill="#e6f6ff" fill-opacity="0.95"/><circle cx="123.0" cy="163.1" r="0.8" fill="#e6f6ff" fill-opacity="0.79"/><circle cx="114.5" cy="156.0" r="0.5" fill="#e6f6ff" fill-opacity="0.51"/><circle cx="141.4" cy="136.1" r="0.8" fill="#e6f6ff" fill-opacity="0.54"/><circle cx="151.6" cy="95.6" r="0.5" fill="#e6f6ff" fill-opacity="0.57"/><circle cx="102.8" cy="118.2" r="0.4" fill="#e6f6ff" fill-opacity="0.55"/><circle cx="132.6" cy="160.7" r="0.5" fill="#e6f6ff" fill-opacity="0.65"/><circle cx="182.6" cy="46.5" r="0.8" fill="#e6f6ff" fill-opacity="0.66"/><circle cx="149.5" cy="135.5" r="0.4" fill="#e6f6ff" fill-opacity="0.95"/><circle cx="151.3" cy="163.7" r="0.5" fill="#e6f6ff" fill-opacity="0.82"/><circle cx="185.3" cy="133.2" r="0.5" fill="#e6f6ff" fill-opacity="0.91"/><circle cx="88.3" cy="72.7" r="0.8" fill="#e6f6ff" fill-opacity="0.97"/><circle cx="84.5" cy="93.9" r="0.5" fill="#e6f6ff" fill-opacity="0.62"/><circle cx="166.4" cy="174.6" r="0.4" fill="#e6f6ff" fill-opacity="0.94"/><circle cx="183.3" cy="140.8" r="0.6" fill="#e6f6ff" fill-opacity="0.56"/><circle cx="148.3" cy="122.5" r="0.6" fill="#e6f6ff" fill-opacity="0.82"/><circle cx="106.4" cy="77.4" r="0.8" fill="#e6f6ff" fill-opacity="0.83"/><circle cx="126.3" cy="105.8" r="0.4" fill="#e6f6ff" fill-opacity="0.50"/><circle cx="204.0" cy="109.8" r="0.8" fill="#e6f6ff" fill-opacity="0.88"/><circle cx="174.3" cy="108.7" r="0.5" fill="#e6f6ff" fill-opacity="0.91"/><circle cx="119.6" cy="50.1" r="0.6" fill="#e6f6ff" fill-opacity="0.72"/><circle cx="75.2" cy="106.3" r="0.4" fill="#e6f6ff" fill-opacity="0.52"/><circle cx="80.8" cy="178.3" r="0.6" fill="#e6f6ff" fill-opacity="0.89"/><circle cx="135.7" cy="48.1" r="0.8" fill="#e6f6ff" fill-opacity="0.83"/><circle cx="174.9" cy="43.9" r="0.4" fill="#e6f6ff" fill-opacity="1.00"/><circle cx="167.4" cy="162.2" r="0.5" fill="#e6f6ff" fill-opacity="0.57"/><circle cx="189.5" cy="83.2" r="0.5" fill="#e6f6ff" fill-opacity="0.84"/><circle cx="165.8" cy="73.2" r="0.6" fill="#e6f6ff" fill-opacity="0.81"/><circle cx="98.3" cy="88.6" r="0.6" fill="#e6f6ff" fill-opacity="0.95"/><circle cx="127.7" cy="78.1" r="0.8" fill="#e6f6ff" fill-opacity="0.60"/><circle cx="99.9" cy="115.9" r="0.6" fill="#e6f6ff" fill-opacity="0.69"/><circle cx="90.6" cy="100.5" r="0.6" fill="#e6f6ff" fill-opacity="0.84"/><circle cx="190.9" cy="65.3" r="0.6" fill="#e6f6ff" fill-opacity="0.56"/><circle cx="138.4" cy="135.4" r="0.6" fill="#e6f6ff" fill-opacity="0.98"/><circle cx="127.2" cy="118.2" r="0.4" fill="#e6f6ff" fill-opacity="0.63"/><circle cx="139.1" cy="168.5" r="0.6" fill="#e6f6ff" fill-opacity="0.63"/><circle cx="204.6" cy="126.6" r="0.6" fill="#e6f6ff" fill-opacity="0.67"/><circle cx="73.7" cy="74.5" r="0.4" fill="#e6f6ff" fill-opacity="0.65"/><circle cx="136.3" cy="86.5" r="0.6" fill="#e6f6ff" fill-opacity="0.87"/><circle cx="169.6" cy="73.2" r="0.6" fill="#e6f6ff" fill-opacity="0.81"/><circle cx="124.2" cy="116.9" r="0.4" fill="#e6f6ff" fill-opacity="0.57"/><circle cx="94.7" cy="138.0" r="0.4" fill="#e6f6ff" fill-opacity="0.53"/><circle cx="143.7" cy="85.6" r="0.6" fill="#e6f6ff" fill-opacity="0.77"/><circle cx="121.5" cy="85.2" r="0.5" fill="#e6f6ff" fill-opacity="0.60"/><circle cx="151.8" cy="111.2" r="0.5" fill="#e6f6ff" fill-opacity="0.51"/><circle cx="177.4" cy="146.1" r="0.8" fill="#e6f6ff" fill-opacity="0.55"/><circle cx="153.9" cy="170.7" r="0.6" fill="#e6f6ff" fill-opacity="0.70"/><circle cx="100.1" cy="41.7" r="0.6" fill="#e6f6ff" fill-opacity="0.80"/><circle cx="145.3" cy="130.3" r="0.8" fill="#e6f6ff" fill-opacity="0.62"/><circle cx="192.1" cy="46.6" r="0.4" fill="#e6f6ff" fill-opacity="0.70"/><circle cx="96.2" cy="48.8" r="0.4" fill="#e6f6ff" fill-opacity="0.51"/><circle cx="141.3" cy="181.1" r="0.5" fill="#e6f6ff" fill-opacity="0.71"/><circle cx="136.6" cy="136.4" r="0.8" fill="#e6f6ff" fill-opacity="0.91"/><circle cx="87.1" cy="86.4" r="0.6" fill="#e6f6ff" fill-opacity="0.81"/><circle cx="205.1" cy="148.6" r="0.8" fill="#e6f6ff" fill-opacity="0.86"/><circle cx="62.9" cy="166.7" r="0.8" fill="#e6f6ff" fill-opacity="0.54"/><circle cx="156.4" cy="66.3" r="0.4" fill="#e6f6ff" fill-opacity="0.63"/><circle cx="154.7" cy="58.5" r="0.6" fill="#e6f6ff" fill-opacity="0.86"/><circle cx="100.3" cy="123.1" r="0.8" fill="#e6f6ff" fill-opacity="0.84"/><circle cx="194.1" cy="185.8" r="0.6" fill="#e6f6ff" fill-opacity="0.82"/><circle cx="201.0" cy="72.5" r="0.4" fill="#e6f6ff" fill-opacity="0.58"/><circle cx="192.3" cy="166.3" r="0.5" fill="#e6f6ff" fill-opacity="0.97"/><circle cx="169.4" cy="89.0" r="0.8" fill="#e6f6ff" fill-opacity="0.66"/><circle cx="96.4" cy="176.1" r="0.8" fill="#e6f6ff" fill-opacity="0.74"/><circle cx="138.4" cy="41.0" r="0.4" fill="#e6f6ff" fill-opacity="0.72"/><circle cx="166.3" cy="125.6" r="0.6" fill="#e6f6ff" fill-opacity="0.89"/><circle cx="118.4" cy="127.8" r="0.5" fill="#e6f6ff" fill-opacity="0.57"/><circle cx="65.9" cy="56.0" r="0.5" fill="#e6f6ff" fill-opacity="0.67"/><circle cx="82.4" cy="44.3" r="0.4" fill="#e6f6ff" fill-opacity="0.57"/><circle cx="154.7" cy="46.4" r="0.4" fill="#e6f6ff" fill-opacity="0.87"/><circle cx="71.5" cy="128.6" r="0.6" fill="#e6f6ff" fill-opacity="0.60"/><circle cx="199.5" cy="120.1" r="0.4" fill="#e6f6ff" fill-opacity="0.94"/><circle cx="170.8" cy="146.7" r="0.8" fill="#e6f6ff" fill-opacity="0.55"/><circle cx="91.6" cy="56.8" r="0.4" fill="#e6f6ff" fill-opacity="0.97"/><circle cx="193.2" cy="153.1" r="0.4" fill="#e6f6ff" fill-opacity="0.91"/><circle cx="152.9" cy="83.1" r="0.4" fill="#e6f6ff" fill-opacity="0.57"/><circle cx="176.0" cy="136.9" r="0.6" fill="#e6f6ff" fill-opacity="0.66"/><circle cx="123.0" cy="43.1" r="0.6" fill="#e6f6ff" fill-opacity="0.97"/><circle cx="69.0" cy="154.0" r="0.6" fill="#e6f6ff" fill-opacity="0.88"/><circle cx="148.7" cy="111.4" r="0.6" fill="#e6f6ff" fill-opacity="0.81"/><circle cx="66.5" cy="101.9" r="0.8" fill="#e6f6ff" fill-opacity="0.76"/><circle cx="76.2" cy="110.3" r="0.4" fill="#e6f6ff" fill-opacity="0.77"/><circle cx="93.2" cy="169.3" r="0.4" fill="#e6f6ff" fill-opacity="0.79"/><circle cx="103.3" cy="105.4" r="0.5" fill="#e6f6ff" fill-opacity="0.64"/><circle cx="170.1" cy="48.1" r="0.6" fill="#e6f6ff" fill-opacity="0.75"/><circle cx="132.8" cy="159.5" r="0.5" fill="#e6f6ff" fill-opacity="0.98"/><circle cx="147.3" cy="183.6" r="0.6" fill="#e6f6ff" fill-opacity="0.79"/><circle cx="84.9" cy="162.3" r="0.5" fill="#e6f6ff" fill-opacity="0.75"/><circle cx="77.8" cy="135.5" r="0.4" fill="#e6f6ff" fill-opacity="0.75"/><circle cx="204.7" cy="124.2" r="0.4" fill="#e6f6ff" fill-opacity="0.81"/><circle cx="113.2" cy="100.2" r="0.8" fill="#e6f6ff" fill-opacity="0.95"/><circle cx="169.3" cy="103.3" r="0.4" fill="#e6f6ff" fill-opacity="0.69"/><circle cx="105.7" cy="104.2" r="0.5" fill="#e6f6ff" fill-opacity="0.69"/><circle cx="189.3" cy="75.0" r="0.8" fill="#e6f6ff" fill-opacity="0.56"/><circle cx="147.5" cy="143.4" r="0.4" fill="#e6f6ff" fill-opacity="0.67"/><circle cx="109.0" cy="63.3" r="0.8" fill="#e6f6ff" fill-opacity="0.83"/><circle cx="168.8" cy="65.4" r="0.8" fill="#e6f6ff" fill-opacity="0.84"/><circle cx="99.0" cy="74.7" r="0.6" fill="#e6f6ff" fill-opacity="0.73"/><circle cx="189.5" cy="75.7" r="0.5" fill="#e6f6ff" fill-opacity="0.63"/><circle cx="170.7" cy="164.0" r="0.5" fill="#e6f6ff" fill-opacity="0.86"/><circle cx="202.4" cy="148.5" r="0.6" fill="#e6f6ff" fill-opacity="0.58"/><circle cx="109.2" cy="68.4" r="0.4" fill="#e6f6ff" fill-opacity="0.58"/><circle cx="156.7" cy="69.3" r="0.5" fill="#e6f6ff" fill-opacity="0.99"/><circle cx="176.5" cy="150.0" r="0.8" fill="#e6f6ff" fill-opacity="0.64"/><circle cx="77.7" cy="176.7" r="0.6" fill="#e6f6ff" fill-opacity="0.60"/><circle cx="117.9" cy="45.1" r="0.8" fill="#e6f6ff" fill-opacity="0.93"/><circle cx="124.9" cy="73.4" r="0.6" fill="#e6f6ff" fill-opacity="0.73"/><circle cx="82.4" cy="130.6" r="0.8" fill="#e6f6ff" fill-opacity="0.50"/><circle cx="96.9" cy="167.9" r="0.8" fill="#e6f6ff" fill-opacity="0.92"/><circle cx="158.2" cy="137.9" r="0.5" fill="#e6f6ff" fill-opacity="0.84"/><circle cx="154.4" cy="108.1" r="0.6" fill="#e6f6ff" fill-opacity="0.63"/><circle cx="162.9" cy="174.2" r="0.5" fill="#e6f6ff" fill-opacity="0.89"/><circle cx="164.7" cy="134.4" r="0.6" fill="#e6f6ff" fill-opacity="0.92"/><circle cx="131.5" cy="42.9" r="0.8" fill="#e6f6ff" fill-opacity="0.76"/><circle cx="157.2" cy="170.9" r="0.6" fill="#e6f6ff" fill-opacity="0.89"/><circle cx="118.0" cy="113.5" r="0.4" fill="#e6f6ff" fill-opacity="0.52"/><circle cx="140.2" cy="64.1" r="0.5" fill="#e6f6ff" fill-opacity="0.76"/><circle cx="76.6" cy="126.2" r="0.5" fill="#e6f6ff" fill-opacity="0.86"/><circle cx="135.8" cy="135.9" r="0.6" fill="#e6f6ff" fill-opacity="0.76"/><circle cx="121.1" cy="182.2" r="0.5" fill="#e6f6ff" fill-opacity="1.00"/><circle cx="88.5" cy="117.1" r="0.4" fill="#e6f6ff" fill-opacity="0.86"/><circle cx="150.4" cy="135.6" r="0.6" fill="#e6f6ff" fill-opacity="0.64"/><circle cx="119.6" cy="42.0" r="0.8" fill="#e6f6ff" fill-opacity="0.96"/><circle cx="152.5" cy="141.2" r="0.6" fill="#e6f6ff" fill-opacity="0.55"/><circle cx="105.7" cy="100.1" r="0.5" fill="#e6f6ff" fill-opacity="1.00"/><circle cx="200.4" cy="109.3" r="0.5" fill="#e6f6ff" fill-opacity="0.56"/><circle cx="173.8" cy="161.4" r="0.5" fill="#e6f6ff" fill-opacity="0.73"/><circle cx="142.9" cy="73.9" r="0.5" fill="#e6f6ff" fill-opacity="0.68"/><circle cx="154.0" cy="162.8" r="0.8" fill="#e6f6ff" fill-opacity="0.73"/><circle cx="104.4" cy="122.2" r="0.5" fill="#e6f6ff" fill-opacity="0.89"/><circle cx="129.6" cy="157.5" r="0.5" fill="#e6f6ff" fill-opacity="0.63"/><circle cx="116.2" cy="78.0" r="0.8" fill="#e6f6ff" fill-opacity="0.84"/><circle cx="131.3" cy="160.8" r="0.6" fill="#e6f6ff" fill-opacity="0.68"/><circle cx="156.2" cy="88.0" r="0.8" fill="#e6f6ff" fill-opacity="0.71"/><circle cx="153.8" cy="138.9" r="0.6" fill="#e6f6ff" fill-opacity="0.58"/><circle cx="105.7" cy="97.8" r="0.4" fill="#e6f6ff" fill-opacity="0.91"/><circle cx="192.4" cy="157.6" r="0.5" fill="#e6f6ff" fill-opacity="0.77"/><circle cx="111.7" cy="127.4" r="0.4" fill="#e6f6ff" fill-opacity="0.60"/><circle cx="72.4" cy="83.9" r="0.4" fill="#e6f6ff" fill-opacity="0.79"/><circle cx="185.0" cy="67.8" r="0.8" fill="#e6f6ff" fill-opacity="0.67"/><circle cx="84.0" cy="175.6" r="0.5" fill="#e6f6ff" fill-opacity="0.80"/><circle cx="161.1" cy="186.6" r="0.4" fill="#e6f6ff" fill-opacity="0.83"/><circle cx="190.7" cy="158.2" r="0.6" fill="#e6f6ff" fill-opacity="0.60"/><circle cx="161.8" cy="119.6" r="0.8" fill="#e6f6ff" fill-opacity="0.84"/><circle cx="78.8" cy="57.8" r="0.8" fill="#e6f6ff" fill-opacity="0.62"/><circle cx="82.1" cy="114.0" r="0.4" fill="#e6f6ff" fill-opacity="0.74"/><circle cx="192.4" cy="145.1" r="0.5" fill="#e6f6ff" fill-opacity="0.75"/><circle cx="139.7" cy="169.4" r="0.4" fill="#e6f6ff" fill-opacity="0.58"/><rect x="60" y="40" width="150" height="150" fill="url(#facel)"/></g>
<path d="M70 145 Q60 125 62 98 Q66 62 96 46 Q120 36 145 40 Q176 46 188 72 Q196 88 196 104 Q204 116 206 129 Q202 134 198 137 Q200 142 197 146 Q199 152 196 157 Q192 170 180 176" fill="none" stroke="#c8ecff" stroke-opacity="0.75" stroke-width="2.2"/>
<polygon points="123.5,81.3 123.4,83.7 119.7,85.3 119.3,87.3 121.7,90.5 120.7,92.6 116.7,92.8 115.5,94.4 116.5,98.3 114.7,99.9 111.0,98.5 109.2,99.5 108.7,103.5 106.5,104.3 103.5,101.5 101.5,101.8 99.5,105.3 97.1,105.2 95.5,101.5 93.5,101.1 90.3,103.5 88.2,102.5 88.0,98.5 86.4,97.3 82.5,98.3 80.9,96.5 82.3,92.8 81.3,91.0 77.3,90.5 76.5,88.3 79.3,85.3 79.0,83.3 75.5,81.3 75.6,78.9 79.3,77.3 79.7,75.3 77.3,72.1 78.3,70.0 82.3,69.8 83.5,68.2 82.5,64.3 84.3,62.7 88.0,64.1 89.8,63.1 90.3,59.1 92.5,58.3 95.5,61.1 97.5,60.8 99.5,57.3 101.9,57.4 103.5,61.1 105.5,61.5 108.7,59.1 110.8,60.1 111.0,64.1 112.6,65.3 116.5,64.3 118.1,66.1 116.7,69.8 117.7,71.6 121.7,72.1 122.5,74.3 119.7,77.3 120.0,79.3" fill="#d5dbe0"/><circle cx="99.5" cy="81.3" r="17.3" fill="#4f5a66"/><circle cx="99.5" cy="81.3" r="14.4" fill="none" stroke="#d5dbe0" stroke-width="3.2" stroke-opacity="0.8"/><circle cx="99.5" cy="81.3" r="8.0" fill="#15202b"/><polygon points="145.0,64.0 144.9,66.0 142.5,67.3 141.9,68.9 143.0,71.5 141.9,73.1 139.1,73.1 137.9,74.2 137.5,77.0 135.7,77.9 133.3,76.5 131.7,76.8 130.0,79.0 128.0,78.9 126.7,76.5 125.1,75.9 122.5,77.0 120.9,75.9 120.9,73.1 119.8,71.9 117.0,71.5 116.1,69.7 117.5,67.3 117.2,65.7 115.0,64.0 115.1,62.0 117.5,60.7 118.1,59.1 117.0,56.5 118.1,54.9 120.9,54.9 122.1,53.8 122.5,51.0 124.3,50.1 126.7,51.5 128.3,51.2 130.0,49.0 132.0,49.1 133.3,51.5 134.9,52.1 137.5,51.0 139.1,52.1 139.1,54.9 140.2,56.1 143.0,56.5 143.9,58.3 142.5,60.7 142.8,62.3" fill="#dde2e6"/><circle cx="130" cy="64" r="10.8" fill="#5f6a75"/><circle cx="130" cy="64" r="9.0" fill="none" stroke="#dde2e6" stroke-width="2.0" stroke-opacity="0.8"/><circle cx="130" cy="64" r="5.5" fill="#2a3848"/><polygon points="180.0,85.0 179.9,87.1 176.7,88.5 176.3,90.2 178.4,93.0 177.5,94.9 174.0,95.0 173.0,96.5 173.8,99.8 172.3,101.2 169.0,100.0 167.5,100.9 167.0,104.4 165.1,105.1 162.5,102.7 160.8,103.0 159.0,106.0 156.9,105.9 155.5,102.7 153.8,102.3 151.0,104.4 149.1,103.5 149.0,100.0 147.5,99.0 144.2,99.8 142.8,98.3 144.0,95.0 143.1,93.5 139.6,93.0 138.9,91.1 141.3,88.5 141.0,86.8 138.0,85.0 138.1,82.9 141.3,81.5 141.7,79.8 139.6,77.0 140.5,75.1 144.0,75.0 145.0,73.5 144.2,70.2 145.7,68.8 149.0,70.0 150.5,69.1 151.0,65.6 152.9,64.9 155.5,67.3 157.2,67.0 159.0,64.0 161.1,64.1 162.5,67.3 164.2,67.7 167.0,65.6 168.9,66.5 169.0,70.0 170.5,71.0 173.8,70.2 175.2,71.7 174.0,75.0 174.9,76.5 178.4,77.0 179.1,78.9 176.7,81.5 177.0,83.2" fill="#d0d7dd"/><circle cx="159" cy="85" r="15.1" fill="#33475d"/><circle cx="159" cy="85" r="12.6" fill="none" stroke="#d0d7dd" stroke-width="2.8" stroke-opacity="0.8"/><circle cx="159" cy="85" r="10.0" fill="#0d2a55"/><polygon points="140.5,97.0 140.4,98.8 138.4,100.1 137.8,101.5 138.3,103.8 137.1,105.1 134.8,105.0 133.5,105.8 132.6,107.9 130.8,108.4 129.0,106.9 127.5,106.8 125.4,107.9 123.8,107.2 123.2,105.0 122.0,104.0 119.7,103.8 118.8,102.2 119.6,100.1 119.2,98.5 117.5,97.0 117.6,95.2 119.6,93.9 120.2,92.5 119.7,90.2 120.9,88.9 123.2,89.0 124.5,88.2 125.4,86.1 127.2,85.6 129.0,87.1 130.5,87.2 132.6,86.1 134.2,86.8 134.8,89.0 136.0,90.0 138.3,90.2 139.2,91.8 138.4,93.9 138.8,95.5" fill="#c9d0d6"/><circle cx="129" cy="97" r="8.3" fill="#66717b"/><circle cx="129" cy="97" r="6.9" fill="none" stroke="#c9d0d6" stroke-width="1.5" stroke-opacity="0.8"/><circle cx="129" cy="97" r="4.0" fill="#e6ecf0"/><polygon points="120.0,122.0 119.9,124.1 116.9,125.6 116.4,127.4 118.1,130.2 117.1,132.1 113.8,132.2 112.6,133.6 112.8,136.9 111.1,138.1 108.1,136.7 106.4,137.4 105.2,140.5 103.1,140.9 101.0,138.3 99.2,138.2 96.8,140.5 94.7,139.9 93.9,136.7 92.3,135.8 89.2,136.9 87.6,135.4 88.2,132.2 87.2,130.7 83.9,130.2 83.1,128.3 85.1,125.6 84.8,123.8 82.0,122.0 82.1,119.9 85.1,118.4 85.6,116.6 83.9,113.8 84.9,111.9 88.2,111.8 89.4,110.4 89.2,107.1 90.9,105.9 93.9,107.3 95.6,106.6 96.8,103.5 98.9,103.1 101.0,105.7 102.8,105.8 105.2,103.5 107.3,104.1 108.1,107.3 109.7,108.2 112.8,107.1 114.4,108.6 113.8,111.8 114.8,113.3 118.1,113.8 118.9,115.7 116.9,118.4 117.2,120.2" fill="#c6ced5"/><circle cx="101" cy="122" r="13.7" fill="#284360"/><circle cx="101" cy="122" r="11.4" fill="none" stroke="#c6ced5" stroke-width="2.5" stroke-opacity="0.8"/><circle cx="101" cy="122" r="6.5" fill="#7fd0ff"/><polygon points="156.5,126.0 156.4,127.7 154.0,129.0 153.6,130.4 155.0,132.7 154.1,134.2 151.4,134.3 150.4,135.4 150.7,138.1 149.2,139.1 146.8,138.0 145.4,138.6 144.4,141.1 142.7,141.4 141.0,139.3 139.5,139.2 137.6,141.1 135.9,140.6 135.2,138.0 133.9,137.3 131.3,138.1 130.0,137.0 130.6,134.3 129.7,133.1 127.0,132.7 126.4,131.1 128.0,129.0 127.8,127.5 125.5,126.0 125.6,124.3 128.0,123.0 128.4,121.6 127.0,119.3 127.9,117.8 130.6,117.7 131.6,116.6 131.3,113.9 132.8,112.9 135.2,114.0 136.6,113.4 137.6,110.9 139.3,110.6 141.0,112.7 142.5,112.8 144.4,110.9 146.1,111.4 146.8,114.0 148.1,114.7 150.7,113.9 152.0,115.0 151.4,117.7 152.3,118.9 155.0,119.3 155.6,120.9 154.0,123.0 154.2,124.5" fill="#9fb2c3"/><circle cx="141" cy="126" r="11.2" fill="#1d3755"/><circle cx="141" cy="126" r="9.3" fill="none" stroke="#9fb2c3" stroke-width="2.0" stroke-opacity="0.8"/><circle cx="141" cy="126" r="4.0" fill="#9fe0ff"/><polygon points="83.5,102.6 83.3,104.3 81.8,105.4 81.1,106.7 81.0,108.6 79.7,109.7 77.8,109.4 76.4,109.8 75.0,111.1 73.3,110.9 72.2,109.4 70.9,108.7 69.0,108.6 67.9,107.3 68.2,105.4 67.8,104.0 66.5,102.6 66.7,100.9 68.2,99.8 68.9,98.5 69.0,96.6 70.3,95.5 72.2,95.8 73.6,95.4 75.0,94.1 76.7,94.3 77.8,95.8 79.1,96.5 81.0,96.6 82.1,97.9 81.8,99.8 82.2,101.2" fill="#b8c2ca"/><circle cx="75" cy="102.6" r="6.1" fill="#46525f"/><circle cx="75" cy="102.6" r="5.1" fill="none" stroke="#b8c2ca" stroke-width="1.1" stroke-opacity="0.8"/><circle cx="75" cy="102.6" r="2.8" fill="#cfd8de"/>
<ellipse cx="117.5" cy="107.5" rx="8" ry="4" transform="rotate(30 117.5 107.5)" fill="none" stroke="#c9d2da" stroke-width="1.5"/>
<rect x="0" y="222" width="260" height="38" fill="#3d77b2"/>
<rect x="-10.0" y="224.0" width="10.6" height="5.0" fill="#4e8bc4"/><rect x="1.8" y="224.0" width="12.8" height="5.0" fill="#8cc2e8"/><rect x="15.8" y="224.0" width="16.9" height="5.0" fill="#8cc2e8"/><rect x="33.9" y="224.0" width="11.9" height="5.0" fill="#5a97cf"/><rect x="47.0" y="224.0" width="9.0" height="5.0" fill="#8cc2e8"/><rect x="57.2" y="224.0" width="14.4" height="5.0" fill="#5a97cf"/><rect x="72.8" y="224.0" width="7.0" height="5.0" fill="#5a97cf"/><rect x="81.1" y="224.0" width="15.0" height="5.0" fill="#8cc2e8"/><rect x="97.3" y="224.0" width="16.5" height="5.0" fill="#5a97cf"/><rect x="115.0" y="224.0" width="12.9" height="5.0" fill="#b9def5"/><rect x="129.1" y="224.0" width="15.9" height="5.0" fill="#6aa6d9"/><rect x="146.2" y="224.0" width="7.2" height="5.0" fill="#b9def5"/><rect x="154.6" y="224.0" width="14.3" height="5.0" fill="#8cc2e8"/><rect x="170.1" y="224.0" width="7.9" height="5.0" fill="#8cc2e8"/><rect x="179.2" y="224.0" width="10.9" height="5.0" fill="#4e8bc4"/><rect x="191.3" y="224.0" width="13.4" height="5.0" fill="#6aa6d9"/><rect x="206.0" y="224.0" width="10.2" height="5.0" fill="#8cc2e8"/><rect x="217.4" y="224.0" width="11.9" height="5.0" fill="#4e8bc4"/><rect x="230.4" y="224.0" width="7.4" height="5.0" fill="#8cc2e8"/><rect x="239.1" y="224.0" width="10.3" height="5.0" fill="#b9def5"/><rect x="250.6" y="224.0" width="11.6" height="5.0" fill="#4e8bc4"/><rect x="263.4" y="224.0" width="18.6" height="5.0" fill="#4e8bc4"/><rect x="-3.0" y="230.2" width="10.9" height="5.3" fill="#6aa6d9"/><rect x="9.1" y="230.2" width="14.7" height="5.3" fill="#5a97cf"/><rect x="25.0" y="230.2" width="10.8" height="5.3" fill="#8cc2e8"/><rect x="37.0" y="230.2" width="15.4" height="5.3" fill="#6aa6d9"/><rect x="53.5" y="230.2" width="13.8" height="5.3" fill="#5a97cf"/><rect x="68.6" y="230.2" width="16.2" height="5.3" fill="#5a97cf"/><rect x="86.0" y="230.2" width="11.6" height="5.3" fill="#4e8bc4"/><rect x="98.8" y="230.2" width="17.4" height="5.3" fill="#4e8bc4"/><rect x="117.4" y="230.2" width="13.7" height="5.3" fill="#b9def5"/><rect x="132.3" y="230.2" width="10.4" height="5.3" fill="#5a97cf"/><rect x="143.9" y="230.2" width="7.4" height="5.3" fill="#b9def5"/><rect x="152.4" y="230.2" width="14.1" height="5.3" fill="#5a97cf"/><rect x="167.7" y="230.2" width="16.3" height="5.3" fill="#4e8bc4"/><rect x="185.2" y="230.2" width="14.1" height="5.3" fill="#4e8bc4"/><rect x="200.5" y="230.2" width="8.6" height="5.3" fill="#4e8bc4"/><rect x="210.3" y="230.2" width="17.3" height="5.3" fill="#5a97cf"/><rect x="228.8" y="230.2" width="9.4" height="5.3" fill="#b9def5"/><rect x="239.4" y="230.2" width="14.3" height="5.3" fill="#6aa6d9"/><rect x="254.9" y="230.2" width="8.0" height="5.3" fill="#6aa6d9"/><rect x="264.1" y="230.2" width="17.2" height="5.3" fill="#b9def5"/><rect x="-10.0" y="236.4" width="16.1" height="5.6" fill="#2f5f95"/><rect x="7.3" y="236.4" width="11.2" height="5.6" fill="#3a73ad"/><rect x="19.7" y="236.4" width="16.2" height="5.6" fill="#b9def5"/><rect x="37.2" y="236.4" width="15.3" height="5.6" fill="#4e8bc4"/><rect x="53.7" y="236.4" width="9.0" height="5.6" fill="#2f5f95"/><rect x="63.9" y="236.4" width="10.6" height="5.6" fill="#6aa6d9"/><rect x="75.7" y="236.4" width="13.6" height="5.6" fill="#2f5f95"/><rect x="90.5" y="236.4" width="12.8" height="5.6" fill="#b9def5"/><rect x="104.5" y="236.4" width="7.3" height="5.6" fill="#3a73ad"/><rect x="113.0" y="236.4" width="16.1" height="5.6" fill="#6aa6d9"/><rect x="130.2" y="236.4" width="13.7" height="5.6" fill="#6aa6d9"/><rect x="145.2" y="236.4" width="12.2" height="5.6" fill="#2f5f95"/><rect x="158.5" y="236.4" width="15.0" height="5.6" fill="#3a73ad"/><rect x="174.7" y="236.4" width="12.5" height="5.6" fill="#6aa6d9"/><rect x="188.4" y="236.4" width="13.4" height="5.6" fill="#3a73ad"/><rect x="203.0" y="236.4" width="14.5" height="5.6" fill="#4e8bc4"/><rect x="218.7" y="236.4" width="17.5" height="5.6" fill="#2f5f95"/><rect x="237.4" y="236.4" width="11.9" height="5.6" fill="#2f5f95"/><rect x="250.6" y="236.4" width="15.0" height="5.6" fill="#3a73ad"/><rect x="266.8" y="236.4" width="18.6" height="5.6" fill="#3a73ad"/><rect x="-3.0" y="242.6" width="9.4" height="5.9" fill="#3a73ad"/><rect x="7.6" y="242.6" width="8.3" height="5.9" fill="#2f5f95"/><rect x="17.2" y="242.6" width="10.1" height="5.9" fill="#4e8bc4"/><rect x="28.5" y="242.6" width="12.2" height="5.9" fill="#3a73ad"/><rect x="41.9" y="242.6" width="17.9" height="5.9" fill="#5a97cf"/><rect x="61.0" y="242.6" width="16.1" height="5.9" fill="#3a73ad"/><rect x="78.2" y="242.6" width="15.6" height="5.9" fill="#3a73ad"/><rect x="95.0" y="242.6" width="10.3" height="5.9" fill="#b9def5"/><rect x="106.5" y="242.6" width="15.3" height="5.9" fill="#8cc2e8"/><rect x="123.0" y="242.6" width="14.8" height="5.9" fill="#4e8bc4"/><rect x="139.1" y="242.6" width="17.8" height="5.9" fill="#2f5f95"/><rect x="158.0" y="242.6" width="15.4" height="5.9" fill="#2f5f95"/><rect x="174.6" y="242.6" width="7.5" height="5.9" fill="#3a73ad"/><rect x="183.4" y="242.6" width="11.5" height="5.9" fill="#4e8bc4"/><rect x="196.0" y="242.6" width="15.6" height="5.9" fill="#3a73ad"/><rect x="212.8" y="242.6" width="18.3" height="5.9" fill="#8cc2e8"/><rect x="232.3" y="242.6" width="14.1" height="5.9" fill="#5a97cf"/><rect x="247.6" y="242.6" width="11.2" height="5.9" fill="#8cc2e8"/><rect x="260.0" y="242.6" width="12.4" height="5.9" fill="#3a73ad"/><rect x="-10.0" y="248.8" width="8.5" height="6.2" fill="#3a73ad"/><rect x="-0.3" y="248.8" width="11.2" height="6.2" fill="#3a73ad"/><rect x="12.1" y="248.8" width="14.4" height="6.2" fill="#6aa6d9"/><rect x="27.7" y="248.8" width="12.5" height="6.2" fill="#8cc2e8"/><rect x="41.4" y="248.8" width="18.1" height="6.2" fill="#5a97cf"/><rect x="60.7" y="248.8" width="10.3" height="6.2" fill="#2f5f95"/><rect x="72.2" y="248.8" width="14.3" height="6.2" fill="#5a97cf"/><rect x="87.7" y="248.8" width="17.2" height="6.2" fill="#2f5f95"/><rect x="106.1" y="248.8" width="16.8" height="6.2" fill="#4e8bc4"/><rect x="124.1" y="248.8" width="13.8" height="6.2" fill="#4e8bc4"/><rect x="139.1" y="248.8" width="11.3" height="6.2" fill="#6aa6d9"/><rect x="151.6" y="248.8" width="14.0" height="6.2" fill="#4e8bc4"/><rect x="166.9" y="248.8" width="16.5" height="6.2" fill="#4e8bc4"/><rect x="184.5" y="248.8" width="15.1" height="6.2" fill="#5a97cf"/><rect x="200.8" y="248.8" width="10.0" height="6.2" fill="#6aa6d9"/><rect x="212.0" y="248.8" width="8.7" height="6.2" fill="#2f5f95"/><rect x="221.9" y="248.8" width="10.3" height="6.2" fill="#3a73ad"/><rect x="233.3" y="248.8" width="16.5" height="6.2" fill="#3a73ad"/><rect x="251.1" y="248.8" width="10.1" height="6.2" fill="#b9def5"/><rect x="262.3" y="248.8" width="15.0" height="6.2" fill="#8cc2e8"/><rect x="-3.0" y="255.0" width="11.0" height="6.5" fill="#3a73ad"/><rect x="9.2" y="255.0" width="13.3" height="6.5" fill="#8cc2e8"/><rect x="23.6" y="255.0" width="16.4" height="6.5" fill="#4e8bc4"/><rect x="41.2" y="255.0" width="16.3" height="6.5" fill="#4e8bc4"/><rect x="58.7" y="255.0" width="10.5" height="6.5" fill="#2f5f95"/><rect x="70.4" y="255.0" width="14.9" height="6.5" fill="#8cc2e8"/><rect x="86.5" y="255.0" width="15.3" height="6.5" fill="#4e8bc4"/><rect x="103.0" y="255.0" width="13.8" height="6.5" fill="#2f5f95"/><rect x="118.0" y="255.0" width="16.3" height="6.5" fill="#8cc2e8"/><rect x="135.5" y="255.0" width="13.3" height="6.5" fill="#b9def5"/><rect x="150.0" y="255.0" width="16.5" height="6.5" fill="#3a73ad"/><rect x="167.7" y="255.0" width="9.6" height="6.5" fill="#b9def5"/><rect x="178.5" y="255.0" width="17.6" height="6.5" fill="#b9def5"/><rect x="197.3" y="255.0" width="10.7" height="6.5" fill="#b9def5"/><rect x="209.1" y="255.0" width="13.9" height="6.5" fill="#4e8bc4"/><rect x="224.2" y="255.0" width="9.4" height="6.5" fill="#3a73ad"/><rect x="234.7" y="255.0" width="9.0" height="6.5" fill="#4e8bc4"/><rect x="244.9" y="255.0" width="11.2" height="6.5" fill="#5a97cf"/><rect x="257.3" y="255.0" width="11.6" height="6.5" fill="#b9def5"/>
<rect x="0" y="221" width="260" height="5" fill="#c9e9fa" fill-opacity="0.45"/>
<path d="M180 228 Q176 215 186 203 L180 190 Q174 183 178 180 Q184 178 192 186 L198 192 L200 163 Q201 154 205 155 Q209 156 209 164 L207 196 Q222 194 230 203 Q236 214 231 228Z" fill="#aebccb"/>
<path d="M180 228 Q176 215 186 203 L180 190 Q174 183 178 180 Q184 178 192 186 L198 192 L200 163 Q201 154 205 155 Q209 156 209 164 L207 196 Q222 194 230 203 Q236 214 231 228Z" fill="none" stroke="#e2ecf4" stroke-width="1" stroke-opacity="0.7"/>
</g>
</svg>
<div class="t" style="right:470px;top:123.1px;font-size:19.6px;letter-spacing:-0.5px;font-weight:bold;color:#fff">Introduction to Artificial Intelligence</div>
<div class="abs" style="left:190px;top:111px;width:423px;height:2px;background:#3b82ea"></div>
<div class="abs" style="left:190px;top:154.5px;width:423px;height:2px;background:#3b82ea"></div>
<div class="abs" style="left:612px;top:112px;width:2px;height:43px;background:#3b82ea"></div>
<div class="abs" style="left:414.5px;top:110px;width:12px;height:4px;background:#fff;border:1px solid #3b82ea"></div>
<div class="abs" style="left:414.5px;top:153.5px;width:12px;height:4px;background:#fff;border:1px solid #3b82ea"></div>
<div class="abs" style="left:611px;top:127px;width:4px;height:12px;background:#fff;border:1px solid #3b82ea"></div>
<div class="abs" style="left:609px;top:108px;width:8px;height:8px;background:#fff;border:1.5px solid #3b82ea;border-radius:50%"></div>
<div class="abs" style="left:609px;top:151.5px;width:8px;height:8px;background:#fff;border:1.5px solid #3b82ea;border-radius:50%"></div>
<div class="abs" style="left:420px;top:100px;width:1.2px;height:11px;background:#3b82ea"></div>
<svg style="left:415px;top:90.5px" width="11" height="11" viewBox="0 0 11 11"><circle cx="5.5" cy="5.5" r="5" fill="#3b82ea" stroke="#fff" stroke-width="0.9"/><path d="M7.6 4.2A2.4 2.4 0 1 0 7.8 6.4" fill="none" stroke="#fff" stroke-width="1"/><path d="M8.2 2.6v2.2H6z" fill="#fff"/></svg>
<div class="t" style="right:435px;top:176.0px;font-size:12.5px;color:#fff">Artificial Intelligence (AI) is the simulation of human intelligence</div>
<div class="t" style="right:484px;top:190.89999999999998px;font-size:12.5px;color:#fff">processes by machines, especially computer system- s.</div>
<div class="t" style="right:492px;top:218.2px;font-size:12.5px;color:#fff">• &nbsp; Core concepts include learning, reasoning, and</div>
<div class="t" style="right:666.6px;top:233.39999999999998px;font-size:12.5px;color:#fff">self-correction.</div>
<div class="t" style="right:421px;top:249.09999999999997px;font-size:12.5px;color:#fff">• &nbsp; AI is considered a transformative technology due to its potential</div>
<div class="t" style="right:445px;top:264.0px;font-size:12.5px;color:#fff">to revolutionize industries and solve complex problems.</div>
<div class="t" style="right:425px;top:279.7px;font-size:12.5px;color:#fff">• &nbsp; AI's capabilities range from simple automation to advanced</div>
<div class="t" style="right:489.5px;top:294.59999999999997px;font-size:12.5px;color:#fff">problem-solving, driving significant innovation.</div>
<div class="abs" style="left:539px;top:500.7px;width:27px;height:2px;background:#7a7d80;border-radius:1px"></div>
<div class="abs" style="left:132.5px;top:513.2px;width:839px;height:27px;background:#edf1f9;border-radius:6px"></div>
<div class="t" style="left:141.5px;top:522px;font-size:8.15px;color:#1f1f1f">Click to add speaker notes</div>
<div class="abs" style="left:990px;top:218.6px;width:26.5px;height:107.6px;background:#eef1f6;border-radius:13px"></div>
<div class="abs" style="left:990px;top:328.6px;width:26.5px;height:57.6px;background:#eef1f6;border-radius:13px"></div>
<svg style="left:998.7px;top:230.4px" width="10" height="10" viewBox="0 0 10 10"><rect x=".6" y="1.6" width="8.8" height="6.8" rx=".6" fill="none" stroke="#444746" stroke-width="1.1"/><path d="M2.2 3.6h3.4M2.2 5h3.4M2.2 6.4h3.4M7.3 3.4v3.2" stroke="#444746" stroke-width=".9"/></svg>
<svg style="left:998.7px;top:256px" width="10" height="10" viewBox="0 0 10 10"><rect x="2.8" y=".8" width="6.4" height="6.4" rx=".6" fill="none" stroke="#444746" stroke-width="1.1"/><path d="M1 2.8v6.2h6.2" fill="none" stroke="#444746" stroke-width="1.1"/><circle cx="6" cy="4" r="1.3" fill="none" stroke="#444746" stroke-width=".9"/></svg>
<svg style="left:998.7px;top:280.8px" width="10" height="10" viewBox="0 0 10 10"><path d="M5.5 1.2H1v7.8h7.8V5" fill="none" stroke="#444746" stroke-width="1.1"/><circle cx="7.6" cy="2.3" r="1.4" fill="none" stroke="#444746" stroke-width=".9"/><path d="M8.6 3.4l1 1M2.6 7.4l2-2 1.2 1.2 1.4-1.4" fill="none" stroke="#444746" stroke-width=".9"/></svg>
<svg style="left:998.7px;top:304.9px" width="10" height="10" viewBox="0 0 10 10"><path d="M.8 1.5h3.2l1 1.2h4.2v5.8H.8z" fill="none" stroke="#444746" stroke-width="1.1" stroke-linejoin="round"/></svg>
<svg style="left:998.7px;top:340.3px" width="10" height="10" viewBox="0 0 10 10"><rect x=".8" y=".8" width="8.4" height="8.4" rx=".6" fill="none" stroke="#444746" stroke-width="1.1"/><path d="M3.8 2.8v4.4L7 5z" fill="none" stroke="#444746" stroke-width=".9"/></svg>
<svg style="left:998.7px;top:364.6px" width="10" height="10" viewBox="0 0 10 10"><circle cx="5" cy="5" r="4.3" fill="none" stroke="#b0b8bf" stroke-width="1"/><circle cx="5" cy="5" r="2.6" fill="#a9b3bc"/></svg>
<div class="abs" style="left:1008.5px;top:364px;width:12.5px;height:12.5px;background:#f1f3f4;border-radius:2px;box-shadow:0 0 1.5px rgba(0,0,0,.2)"></div>
<div class="t" style="left:1010px;top:367px;font-size:5px;color:#80868b">&gt;-&lt;</div>
<div class="abs" style="left:1012px;top:522.8px;width:22.5px;height:22.5px;background:#fff;border-radius:50%;box-shadow:0 1px 2px rgba(60,64,67,.3),0 1px 3px 1px rgba(60,64,67,.15)"></div>
<svg style="left:1017px;top:530.5px" width="5" height="7" viewBox="0 0 5 7"><path d="M4 .6L1.2 3.5 4 6.4" fill="none" stroke="#444746" stroke-width="1.2"/></svg>
<div class="abs" style="left:100px;top:32px;width:180px;height:385.5px;background:#fff;border-radius:4px;box-shadow:0 2px 3px rgba(60,64,67,.3),0 3px 8px 3px rgba(60,64,67,.15)"></div>
<div class="abs" style="left:100px;top:53px;width:180px;height:18px;background:#eef1f6"></div>
<div class="abs" style="left:102px;top:51.2px;width:63.5px;height:20.3px;border:1px solid #d9525e"></div>
<svg style="left:107.6px;top:40.0px" width="9" height="9" viewBox="0 0 12 12"><rect x="1" y="1" width="10" height="10" rx="1" fill="none" stroke="#444746" stroke-width="1.3"/><path d="M2.5 9l2.2-2.6 1.6 1.6 1.5-1.8 2 2.8z" fill="#444746"/></svg>
<div class="t" style="left:121.6px;top:41.4px;font-size:8.1px;color:#1f1f1f">Image</div>
<svg style="left:266.5px;top:42.3px" width="4" height="4.5" viewBox="0 0 4 4.5"><path d="M0 0L4 2.25 0 4.5z" fill="#444746"/></svg>
<svg style="left:107.6px;top:57.5px" width="9" height="9" viewBox="0 0 12 12"><path d="M0.5 1.5h6.5M3.75 1.5v9.5" stroke="#444746" stroke-width="1.7"/><path d="M6.5 5h5M9 5v6" stroke="#444746" stroke-width="1.4"/></svg>
<div class="t" style="left:121.6px;top:58.9px;font-size:8.1px;color:#1f1f1f">Text box</div>
<svg style="left:107.6px;top:75.5px" width="9" height="9" viewBox="0 0 12 12"><circle cx="4.5" cy="4.5" r="3.6" fill="none" stroke="#444746" stroke-width="1.2"/><path d="M5 6.5h6v4.8H5.8V8" fill="none" stroke="#444746" stroke-width="1.2"/></svg>
<div class="t" style="left:121.6px;top:76.9px;font-size:8.1px;color:#1f1f1f">Shape</div>
<svg style="left:266.5px;top:77.8px" width="4" height="4.5" viewBox="0 0 4 4.5"><path d="M0 0L4 2.25 0 4.5z" fill="#444746"/></svg>
<svg style="left:107.6px;top:93.5px" width="9" height="9" viewBox="0 0 12 12"><rect x="3.3" y="0.8" width="8" height="8" rx=".8" fill="none" stroke="#444746" stroke-width="1.2"/><rect x="5.5" y="3" width="3.6" height="3.6" fill="none" stroke="#444746" stroke-width="1"/><path d="M1 3v8.2h8.2" fill="none" stroke="#444746" stroke-width="1.2"/></svg>
<div class="t" style="left:121.6px;top:94.9px;font-size:8.1px;color:#1f1f1f">Building blocks</div>
<svg style="left:107.6px;top:111.5px" width="9" height="9" viewBox="0 0 12 12"><path d="M6 0.8v3.5M1.5 11V5h9v6M6 4.3v6.7" fill="none" stroke="#444746" stroke-width="1.2"/><circle cx="1.5" cy="11" r="1.2" fill="#444746"/><circle cx="6" cy="11" r="1.2" fill="#444746"/><circle cx="10.5" cy="11" r="1.2" fill="#444746"/></svg>
<div class="t" style="left:121.6px;top:112.9px;font-size:8.1px;color:#1f1f1f">Diagram</div>
<svg style="left:266.5px;top:113.8px" width="4" height="4.5" viewBox="0 0 4 4.5"><path d="M0 0L4 2.25 0 4.5z" fill="#444746"/></svg>
<svg style="left:107.6px;top:129.5px" width="9" height="9" viewBox="0 0 12 12"><rect x="1" y="1" width="10" height="10" rx=".8" fill="none" stroke="#444746" stroke-width="1.2"/><path d="M1 3.8h10M4.5 3.8V11M7.5 3.8V11" stroke="#444746" stroke-width="1"/></svg>
<div class="t" style="left:121.6px;top:130.9px;font-size:8.1px;color:#1f1f1f">Table</div>
<svg style="left:266.5px;top:131.8px" width="4" height="4.5" viewBox="0 0 4 4.5"><path d="M0 0L4 2.25 0 4.5z" fill="#444746"/></svg>
<svg style="left:107.6px;top:147.5px" width="9" height="9" viewBox="0 0 12 12"><rect x="1" y="1" width="10" height="10" rx=".5" fill="none" stroke="#444746" stroke-width="1.3"/><path d="M3.5 9V5.5M5.5 9V4M7.5 9V7M3 9.2h6" stroke="#444746" stroke-width="0.9"/></svg>
<div class="t" style="left:121.6px;top:148.9px;font-size:8.1px;color:#1f1f1f">Chart</div>
<svg style="left:266.5px;top:149.8px" width="4" height="4.5" viewBox="0 0 4 4.5"><path d="M0 0L4 2.25 0 4.5z" fill="#444746"/></svg>
<svg style="left:107.6px;top:165.5px" width="9" height="9" viewBox="0 0 12 12"><path d="M1.5 1.5l9 9" stroke="#444746" stroke-width="1.3"/><circle cx="1.7" cy="1.7" r="1.6" fill="#444746"/><circle cx="10.3" cy="10.3" r="1.6" fill="#444746"/></svg>
<div class="t" style="left:121.6px;top:166.9px;font-size:8.1px;color:#1f1f1f">Line</div>
<svg style="left:266.5px;top:167.8px" width="4" height="4.5" viewBox="0 0 4 4.5"><path d="M0 0L4 2.25 0 4.5z" fill="#444746"/></svg>
<svg style="left:107.6px;top:183.8px" width="9" height="9" viewBox="0 0 12 12"><path d="M1.5 11L5.5 2h1L10.5 11M3.2 8h5.6" fill="none" stroke="#444746" stroke-width="2.1" stroke-linejoin="round"/></svg>
<div class="t" style="left:121.6px;top:185.20000000000002px;font-size:8.1px;color:#1f1f1f">Word art</div>
<svg style="left:107.6px;top:210.5px" width="9" height="9" viewBox="0 0 12 12"><rect x="0.8" y="2" width="10.4" height="8.5" rx=".6" fill="none" stroke="#444746" stroke-width="1.2"/><path d="M0.8 4.2h10.4M3 2v2.2M5.5 2v2.2M8 2v2.2" stroke="#444746" stroke-width="1"/></svg>
<div class="t" style="left:121.6px;top:211.9px;font-size:8.1px;color:#1f1f1f">Video</div>
<svg style="left:107.6px;top:228.7px" width="9" height="9" viewBox="0 0 12 12"><path d="M1 4.2h2.2L6.2 1.5v9L3.2 7.8H1z" fill="none" stroke="#444746" stroke-width="1.2" stroke-linejoin="round"/><path d="M8 4a2.6 2.6 0 0 1 0 4M9.4 2.5a4.6 4.6 0 0 1 0 7" fill="none" stroke="#444746" stroke-width="1.1"/></svg>
<div class="t" style="left:121.6px;top:230.1px;font-size:8.1px;color:#1f1f1f">Audio</div>
<svg style="left:107.6px;top:256.0px" width="9" height="9" viewBox="0 0 12 12"><path d="M1 11h3.2V9.5A4.3 4.3 0 1 1 7.8 9.5V11H11" fill="none" stroke="#444746" stroke-width="1.5"/></svg>
<div class="t" style="left:121.6px;top:257.4px;font-size:8.1px;color:#1f1f1f">Special characters</div>
<svg style="left:107.6px;top:274.0px" width="9" height="9" viewBox="0 0 12 12"><ellipse cx="6.6" cy="5" rx="4.4" ry="3.4" transform="rotate(-40 6.6 5)" fill="none" stroke="#444746" stroke-width="1.2"/><path d="M2 6.5a3.6 3.6 0 0 0 4.6 4.6" fill="none" stroke="#444746" stroke-width="1.2"/></svg>
<div class="t" style="left:121.6px;top:275.4px;font-size:8.1px;color:#1f1f1f">Animation</div>
<svg style="left:107.6px;top:301.3px" width="9" height="9" viewBox="0 0 12 12"><path d="M5 3H3.2a3 3 0 0 0 0 6H5M7 3h1.8a3 3 0 0 1 0 6H7M3.8 6h4.4" fill="none" stroke="#444746" stroke-width="1.2"/></svg>
<div class="t" style="left:121.6px;top:302.7px;font-size:8.1px;color:#1f1f1f">Link</div>
<div class="t" style="right:753px;top:302.7px;font-size:8.1px;color:#444746">Ctrl+K</div>
<svg style="left:107.6px;top:319.2px" width="9" height="9" viewBox="0 0 12 12"><path d="M1 1h10v8H3.2L1 11.2z" fill="none" stroke="#444746" stroke-width="1.2" stroke-linejoin="round"/><path d="M6 2.8v4.4M3.8 5h4.4" stroke="#444746" stroke-width="1.1"/></svg>
<div class="t" style="left:121.6px;top:320.59999999999997px;font-size:8.1px;color:#1f1f1f">Comment</div>
<div class="t" style="right:753px;top:320.59999999999997px;font-size:8.1px;color:#444746">Ctrl+Alt+M</div>
<svg style="left:107.6px;top:346.3px" width="9" height="9" viewBox="0 0 12 12"><path d="M6 1.2v9.6M1.2 6h9.6" stroke="#444746" stroke-width="1.2"/></svg>
<div class="t" style="left:121.6px;top:347.7px;font-size:8.1px;color:#1f1f1f">New slide</div>
<div class="t" style="right:753px;top:347.7px;font-size:8.1px;color:#444746">Ctrl+M</div>
<svg style="left:107.6px;top:364.5px" width="9" height="9" viewBox="0 0 12 12"><rect x="0.8" y="2" width="10.4" height="8" rx=".6" fill="none" stroke="#444746" stroke-width="1.2"/><path d="M2.6 4.3h3M2.6 6h3M2.6 7.7h3M7.5 4v4.2M9.2 4v4.2" stroke="#444746" stroke-width="1"/></svg>
<div class="t" style="left:121.6px;top:365.9px;font-size:8.1px;color:#1f1f1f">Templates</div>
<svg style="left:107.6px;top:382.5px" width="9" height="9" viewBox="0 0 12 12"><path d="M4.3 1L3.2 11M8.8 1L7.7 11M1.2 4h10M0.8 8h10" stroke="#444746" stroke-width="1.2"/></svg>
<div class="t" style="left:121.6px;top:383.9px;font-size:8.1px;color:#1f1f1f">Slide numbers</div>
<svg style="left:107.6px;top:400.5px" width="9" height="9" viewBox="0 0 12 12"><path d="M7 1H1v10h10V5" fill="none" stroke="#b9bcc0" stroke-width="1.1"/><path d="M9.5 0.5v3M8 2h3" stroke="#b9bcc0" stroke-width="1"/><path d="M2.8 9l1.5-1.8 1.2 1.2 1.2-1.4 1.6 2z" fill="#b9bcc0"/></svg>
<div class="t" style="left:121.6px;top:401.9px;font-size:8.1px;color:#a8abaf">Placeholder</div>
<svg style="left:266.5px;top:402.8px" width="4" height="4.5" viewBox="0 0 4 4.5"><path d="M0 0L4 2.25 0 4.5z" fill="#b9bcc0"/></svg>
<div class="abs" style="left:100px;top:200.9px;width:180px;height:1px;background:#e3e3e3"></div>
<div class="abs" style="left:100px;top:245.8px;width:180px;height:1px;background:#e3e3e3"></div>
<div class="abs" style="left:100px;top:291.5px;width:180px;height:1px;background:#e3e3e3"></div>
<div class="abs" style="left:100px;top:337.0px;width:180px;height:1px;background:#e3e3e3"></div>
</body></html>
